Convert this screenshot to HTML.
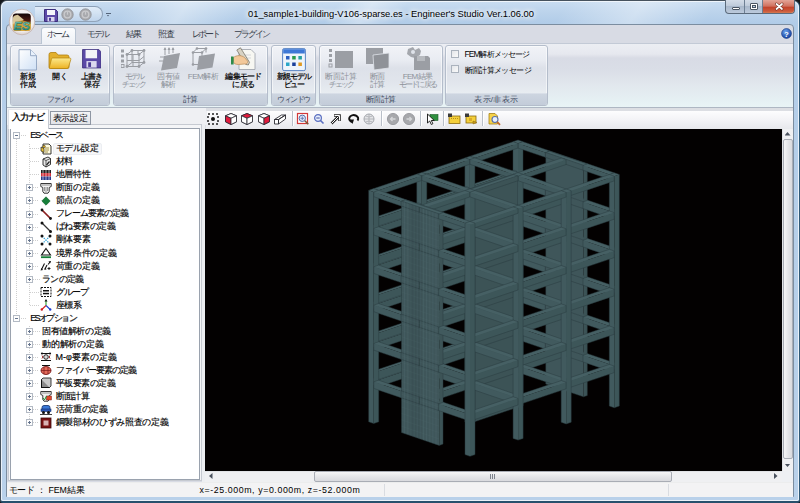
<!DOCTYPE html>
<html lang="ja"><head><meta charset="utf-8"><title>Engineer's Studio</title>
<style>
html,body{margin:0;padding:0;}
body{width:800px;height:503px;overflow:hidden;position:relative;background:#14181c;font-family:"Liberation Sans",sans-serif;font-size:9px;color:#000;}
div,span,svg,i,b{position:absolute;box-sizing:border-box;display:block;font-style:normal;font-weight:normal;}
.t{white-space:nowrap;line-height:1;}
.e{fill:none;stroke:#283a3e;stroke-width:.55;stroke-opacity:.85}
#frame{left:0;top:0;width:800px;height:503px;border:1px solid #46525e;border-right:1.5px solid #2f5a78;border-bottom:2px solid #27506c;border-radius:7px 7px 3px 3px;background:linear-gradient(180deg,#c9ddf1 0,#bdd4ec 10px,#b1cce8 22px,#b4cee9 60px,#b9d1ea 100%);overflow:hidden;}
#frameglow{left:1px;top:1px;width:797.5px;height:500px;border:1px solid rgba(255,255,255,.7);border-radius:6px 6px 2px 2px;}
.streak{background:linear-gradient(90deg,rgba(255,255,255,0),rgba(255,255,255,.35),rgba(255,255,255,0));height:22px;top:1px;transform:skewX(-35deg);}
#client{left:6px;top:24px;width:788px;height:473px;background:#d8dbe4;border:1px solid #7b8da0;border-radius:4px 4px 0 0;}
#title{left:248px;top:10.3px;font-size:9.35px;color:#000;text-shadow:0 0 4px #fff,0 0 6px #fff,0 0 8px rgba(255,255,255,.8);}
#capbtn{left:725px;top:0;width:70px;height:14px;border:1px solid #5b6b7c;border-top:none;border-radius:0 0 4px 4px;overflow:hidden;background:linear-gradient(180deg,#d3dce8,#bfcbda 45%,#a9b8cb 50%,#bccadc);}
#capbtn .min{left:0;top:0;width:19px;height:14px;border-right:1px solid #6d7f93;}
#capbtn .max{left:19px;top:0;width:18px;height:14px;border-right:1px solid #6d7f93;}
#capbtn .cls{left:37px;top:0;width:32px;height:14px;background:linear-gradient(180deg,#e3a598,#d0705e 45%,#c2412a 50%,#cc5a3c 80%,#d98a5c);}
.tab{top:30px;font-size:8.6px;color:#363d49;}
#hometab{left:41px;top:27px;width:35px;height:17px;background:linear-gradient(180deg,#fbfcfe,#eef1f6);border:1px solid #b9c4d2;border-bottom:none;border-radius:3px 3px 0 0;}
#ribbon{left:7px;top:42.5px;width:786px;height:65.5px;background:linear-gradient(180deg,#eceef3 0,#e6e8ef 10px,#d8dbe5 14px,#dadee7 26px,#e2e8ee 42px,#e6f1f4 58px,#e9f4f6 63px,#dfe6ea 65px);border-top:1px solid #c3cad6;border-bottom:1px solid #aeb7c3;}
.grp{top:44.5px;height:61px;border:1px solid #b4bdcb;border-radius:3px;background:linear-gradient(180deg,#f1f3f7 0,#e9ecf2 14px,#dde1e9 22px,#e1e5ec 36px,#e9eef2 49px);box-shadow:0 0 0 1px rgba(255,255,255,.55) inset;overflow:hidden;}
.grp .lab{left:0;bottom:0;width:100%;height:12px;background:linear-gradient(180deg,#cdd5e0,#c3ccd9);border-top:1px solid #d9dfe8;}
.grp .lab span{left:0;width:100%;top:2px;text-align:center;font-size:8px;color:#3e4b5e;line-height:1;white-space:nowrap;}
.bl{-webkit-text-stroke:.2px #000;font-size:8px;line-height:8.2px;text-align:center;color:#000;white-space:nowrap;width:60px;margin-left:-30px;}
.bl.dis{color:#8d929a;-webkit-text-stroke:0;}
#tbband{left:7px;top:108px;width:786px;height:21px;background:#dcdee3;}
#tbrow{left:205.5px;top:110.8px;width:587.5px;height:18px;background:linear-gradient(180deg,#fdfdfe,#f3f3f6 50%,#e7e8ec);border-left:1px solid #eceef1;}
#navo{left:7.5px;top:124.2px;width:194.5px;height:357px;background:#f4f5f7;border:1px solid #c6cad1;}
#nav{left:9.5px;top:127.5px;width:190.5px;height:352px;background:#fff;border:1px solid #9aa2ae;}
.tr{font-size:9px;line-height:1;white-space:nowrap;color:#000;-webkit-text-stroke:.15px #000;}
#vp{left:205px;top:128.5px;width:576.5px;height:342px;background:#030101;overflow:hidden;}
#status{left:7px;top:481.5px;width:786px;height:15px;background:#f3f3f4;border-top:1px solid #eceded;}

</style></head>
<body>
<div id="frame"><div class="streak" style="left:120px;width:120px"></div><div class="streak" style="left:330px;width:70px"></div><div class="streak" style="left:560px;width:150px"></div></div>
<div id="frameglow"></div>
<div id="client"></div>
<div id="ribbon"></div>
<div id="tbband"></div><div id="tbrow"></div>
<div id="title" class="t">01_sample1-building-V106-sparse.es - Engineer's Studio Ver.1.06.00</div>
<div id="capbtn"><div class="min"><i style="left:6px;top:7px;width:8px;height:3px;background:#fff;border:1px solid #4a5563;border-radius:1px"></i></div><div class="max"><i style="left:5px;top:3px;width:8px;height:7px;border:1px solid #4a5563;background:#fff;border-radius:1px"></i><i style="left:7px;top:5px;width:4px;height:3px;border:1px solid #4a5563;background:#b9cfe6"></i></div><div class="cls"><svg width="32" height="14" viewBox="0 0 32 14" style="left:0;top:0"><path d="M13.500 4l5.500 5M19 4l-5.500 5" stroke="#6a2f25" stroke-width="3" stroke-linecap="round"/><path d="M13.500 4l5.500 5M19 4l-5.500 5" stroke="#fff" stroke-width="1.700" stroke-linecap="round"/></svg></div></div>
<svg id="appbtn" width="30" height="30" viewBox="0 0 30 30" style="left:7px;top:7px">
<defs><radialGradient id="ab1" cx="50%" cy="40%" r="60%"><stop offset="0" stop-color="#ffffff"/><stop offset=".75" stop-color="#f3f1f1"/><stop offset="1" stop-color="#d9cdca"/></radialGradient>
<linearGradient id="ab2" x1="0" y1="0" x2="0" y2="1"><stop offset="0" stop-color="#120606"/><stop offset=".4" stop-color="#4a1a12"/><stop offset=".62" stop-color="#b78a3a"/><stop offset="1" stop-color="#d9a43a"/></linearGradient>
<linearGradient id="ab3" x1="0" y1="0" x2="0" y2="1"><stop offset="0" stop-color="#8fe0cc"/><stop offset="1" stop-color="#0f7f78"/></linearGradient></defs>
<circle cx="15" cy="15" r="12.800" fill="url(#ab1)" stroke="#c4b4b0" stroke-width=".8"/>
<rect x="5.800" y="6.400" width="18" height="17.600" rx="3.200" fill="url(#ab2)"/>
<path d="M5.800 12q0-3 2-3.500l3-.8 6 5-6 4-5 1z" fill="#e9d9a8" opacity=".9"/>
<path d="M5.800 17l9-4 9 3v5q0 3-3.200 3H9q-3.200 0-3.200-3.200z" fill="#d8a63c" opacity=".75"/>
<text x="6.600" y="23.300" font-family="Liberation Sans, sans-serif" font-size="10.800" font-weight="bold" font-style="italic" fill="url(#ab3)" stroke="#0c5a58" stroke-width=".3" textLength="16.500" lengthAdjust="spacingAndGlyphs">ES</text>
</svg>
<div id="qat" style="left:35px;top:6px;width:68px;height:16px;border:1px solid rgba(120,140,165,.75);border-radius:0 8px 8px 0;border-left:none;background:linear-gradient(180deg,rgba(235,243,251,.75),rgba(200,217,236,.55))"></div>
<svg width="14" height="13" viewBox="0 0 14 13" style="left:43.500px;top:8.500px"><path d="M.5.5h11l2 2v10H.5z" fill="#5d4aa8" stroke="#3d2f7c"/><rect x="3" y="1" width="8" height="5" fill="#f4f4fa"/><rect x="3.500" y="8" width="7" height="4.500" fill="#d9d6ee"/><rect x="5" y="8.800" width="2" height="3" fill="#4a3a94"/></svg>
<svg width="13" height="13" viewBox="0 0 13 13" style="left:61.2px;top:8.200px"><circle cx="6.500" cy="6.500" r="5.700" fill="#a9aaae" stroke="#8d8f95" stroke-width=".8"/><circle cx="6.500" cy="6.500" r="3.300" fill="none" stroke="#c9cacd" stroke-width="1.300"/><path d="M6.500 3.500v3.200" stroke="#c9cacd" stroke-width="1.200"/></svg>
<svg width="13" height="13" viewBox="0 0 13 13" style="left:79.1px;top:8.200px"><circle cx="6.500" cy="6.500" r="5.700" fill="#a9aaae" stroke="#8d8f95" stroke-width=".8"/><circle cx="6.500" cy="6.500" r="3.300" fill="none" stroke="#c9cacd" stroke-width="1.300"/><path d="M6.500 3.500v3.200" stroke="#c9cacd" stroke-width="1.200"/></svg>
<i style="left:105.500px;top:12.500px;width:5px;height:1px;background:#55657a"></i><i style="left:106.500px;top:14.500px;width:3px;height:2px;background:#55657a;clip-path:polygon(0 0,100% 0,50% 100%)"></i>
<div id="hometab"></div>
<span class="t tab" style="letter-spacing:-1.93px;left:46.5px">ホーム</span>
<span class="t tab" style="letter-spacing:-1.83px;left:86.5px">モデル</span>
<span class="t tab" style="letter-spacing:-1.25px;left:125.5px">結果</span>
<span class="t tab" style="letter-spacing:-1.25px;left:158.0px">照査</span>
<span class="t tab" style="letter-spacing:-2.25px;left:191.5px">レポート</span>
<span class="t tab" style="letter-spacing:-1.80px;left:233.5px">プラグイン</span>
<svg width="11" height="11" viewBox="0 0 12 12" style="left:781px;top:28px"><defs><radialGradient id="hg" cx="40%" cy="30%" r="75%"><stop offset="0" stop-color="#6aa0ea"/><stop offset="1" stop-color="#123e9c"/></radialGradient></defs><circle cx="6" cy="6" r="5.400" fill="url(#hg)" stroke="#0c2f7a" stroke-width=".6"/><text x="6" y="9.300" text-anchor="middle" font-family="Liberation Sans, sans-serif" font-weight="bold" font-size="8.500" fill="#fff">?</text></svg>
<div class="grp" style="left:9.5px;width:100.0px"><div class="lab"><span><span class="t" style="letter-spacing:-1.75px;position:static;display:inline">ファイル</span></span></div></div>
<div class="grp" style="left:112.5px;width:155.5px"><div class="lab"><span><span class="t" style="letter-spacing:-0.50px;position:static;display:inline">計算</span></span></div></div>
<div class="grp" style="left:270.5px;width:45.5px"><div class="lab"><span><span class="t" style="letter-spacing:-1.50px;position:static;display:inline">ウィンドウ</span></span></div></div>
<div class="grp" style="left:318.5px;width:124.0px"><div class="lab"><span><span class="t" style="letter-spacing:-0.50px;position:static;display:inline">断面計算</span></span></div></div>
<div class="grp" style="left:445.0px;width:102.5px"><div class="lab"><span><span class="t" style="letter-spacing:0.26px;position:static;display:inline">表示/非表示</span></span></div></div>
<span class="bl" style="left:27.5px;top:72.6px"><span class="t" style="letter-spacing:-0.25px;position:static;display:inline">新規</span></span>
<span class="bl" style="left:27.5px;top:80.7px"><span class="t" style="letter-spacing:-0.25px;position:static;display:inline">作成</span></span>
<span class="bl" style="left:59.5px;top:72.6px"><span class="t" style="letter-spacing:-0.25px;position:static;display:inline">開く</span></span>
<span class="bl" style="left:91.5px;top:72.6px"><span class="t" style="letter-spacing:-0.93px;position:static;display:inline">上書き</span></span>
<span class="bl" style="left:91.5px;top:80.7px"><span class="t" style="letter-spacing:-0.25px;position:static;display:inline">保存</span></span>
<span class="bl dis" style="left:133.5px;top:72.6px"><span class="t" style="letter-spacing:-2.00px;position:static;display:inline">モデル</span></span>
<span class="bl dis" style="left:133.5px;top:80.7px"><span class="t" style="letter-spacing:-2.10px;position:static;display:inline">チェック</span></span>
<span class="bl dis" style="left:168.5px;top:72.6px"><span class="t" style="letter-spacing:-0.50px;position:static;display:inline">固有値</span></span>
<span class="bl dis" style="left:168.5px;top:80.7px"><span class="t" style="letter-spacing:-0.10px;position:static;display:inline">解析</span></span>
<span class="bl dis" style="left:203.0px;top:72.6px"><span class="t" style="letter-spacing:-0.50px;position:static;display:inline">FEM解析</span></span>
<span class="bl" style="left:243.5px;top:72.6px"><span class="t" style="letter-spacing:-0.80px;position:static;display:inline">編集モード</span></span>
<span class="bl" style="left:243.5px;top:80.7px"><span class="t" style="letter-spacing:-0.50px;position:static;display:inline">に戻る</span></span>
<span class="bl" style="left:293.5px;top:72.6px"><span class="t" style="letter-spacing:-1.24px;position:static;display:inline">新規モデル</span></span>
<span class="bl" style="left:293.5px;top:80.7px"><span class="t" style="letter-spacing:-1.73px;position:static;display:inline">ビュー</span></span>
<span class="bl dis" style="left:341.0px;top:72.6px"><span class="t" style="letter-spacing:-0.20px;position:static;display:inline">断面計算</span></span>
<span class="bl dis" style="left:341.0px;top:80.7px"><span class="t" style="letter-spacing:-2.08px;position:static;display:inline">チェック</span></span>
<span class="bl dis" style="left:377.0px;top:72.6px"><span class="t" style="letter-spacing:-0.50px;position:static;display:inline">断面</span></span>
<span class="bl dis" style="left:377.0px;top:80.7px"><span class="t" style="letter-spacing:-0.50px;position:static;display:inline">計算</span></span>
<span class="bl dis" style="left:417.5px;top:72.6px"><span class="t" style="letter-spacing:-0.68px;position:static;display:inline">FEM結果</span></span>
<span class="bl dis" style="left:417.5px;top:80.7px"><span class="t" style="letter-spacing:-1.67px;position:static;display:inline">モードに戻る</span></span>
<svg width="20" height="22" viewBox="0 0 20 22" style="left:18px;top:48.500px"><defs><linearGradient id="nd" x1="0" y1="0" x2="1" y2="1"><stop offset="0" stop-color="#ffffff"/><stop offset="1" stop-color="#cfe0f5"/></linearGradient></defs><path d="M1 .7h11.500l6 6V21H1z" fill="url(#nd)" stroke="#8ea3c0" stroke-width=".9"/><path d="M12.500 .7v6h6" fill="#e9f1fb" stroke="#8ea3c0" stroke-width=".9"/></svg>
<svg width="24" height="19" viewBox="0 0 24 19" style="left:48px;top:50.500px"><defs><linearGradient id="fo" x1="0" y1="0" x2="0" y2="1"><stop offset="0" stop-color="#fdea8c"/><stop offset="1" stop-color="#ecb224"/></linearGradient></defs><path d="M1 3.500q0-2 2-2h5l2 2.500h9q2 0 2 2V16q0 1.500-1.500 1.500H2.500Q1 17.500 1 16z" fill="#e3b02c" stroke="#b3820f" stroke-width=".8"/><path d="M4.500 7h17q1.800 0 1.300 1.600l-2.300 7.600q-.4 1.300-1.900 1.300H2.300q-1.300 0-.9-1.300l2-7.800Q3.700 7 4.500 7z" fill="url(#fo)" stroke="#b3820f" stroke-width=".7"/></svg>
<svg width="19.500" height="19.500" viewBox="0 0 22 21" preserveAspectRatio="none" style="left:81.500px;top:49.300px"><path d="M.6.600h18.400l2.400 2.400v17.400H.6z" fill="#5b49a6" stroke="#3b2d7b" stroke-width=".9"/><rect x="4" y="1" width="13" height="9" fill="#f3f3f8"/><rect x="5" y="13" width="11.500" height="7" fill="#dcd9ef"/><rect x="7" y="14.300" width="3.200" height="5" fill="#4a3a94"/></svg>
<svg width="25" height="22" viewBox="0 0 25 22" style="left:121px;top:48px"><g stroke="#9a9da3" stroke-width="1" fill="none"><path d="M6 6.500h12v12H6zM11 2.500h12v12H11zM6 6.500l5-4M18 6.500l5-4M18 18.500l5-4M6 18.500l5-4M12 6.500v12M6 12.500h12M17 2.500v4M23 8.500l-5 4"/></g><g fill="#9a9da3"><rect x="0" y="1.500" width="3" height="3"/><rect x="0" y="6.500" width="3" height="3"/><rect x="0" y="11.500" width="3" height="3"/><rect x="0" y="16.500" width="3" height="3" fill="none" stroke="#9a9da3"/><circle cx="6" cy="6.500" r="1.400"/><circle cx="18" cy="6.500" r="1.400"/><circle cx="6" cy="18.500" r="1.400"/><circle cx="18" cy="18.500" r="1.400"/><circle cx="11" cy="2.500" r="1.400"/><circle cx="23" cy="2.500" r="1.400"/><circle cx="23" cy="14.500" r="1.400"/></g></svg>
<svg width="26" height="24" viewBox="0 0 26 24" style="left:156px;top:47px"><path d="M8 9l16-3-3 15-16 2.500z" fill="#9b9ea4"/><g stroke="#9b9ea4" stroke-width="1"><path d="M9 1v7M13 1v6M17 1v5M4 10h4M3 14h4"/></g><path d="M9 0l-1.500 3h3zM13 0l-1.500 3h3zM17 0l-1.500 3h3z" fill="#9b9ea4"/></svg>
<svg width="26" height="24" viewBox="0 0 26 24" style="left:190px;top:47px"><g stroke="#9a9da3" stroke-width="1" fill="none"><path d="M3 5.500h9v12H3zM7 1.500h9v4M3 5.500l4-4M12 5.500l4-4"/></g><g fill="#9a9da3"><circle cx="3" cy="5.500" r="1.300"/><circle cx="12" cy="5.500" r="1.300"/><circle cx="7" cy="1.500" r="1.300"/><circle cx="16" cy="1.500" r="1.300"/><circle cx="3" cy="17.500" r="1.300"/></g><path d="M9 9l16-2.500-2.500 14L7 23z" fill="#9b9ea4"/></svg>
<svg width="26" height="24" viewBox="0 0 26 24" style="left:231px;top:47px"><path d="M8 2.500h12l4 4v16H8z" fill="#f7f7f2" stroke="#9aa0a8" stroke-width=".8"/><path d="M11 8h9M11 11h9M11 14h6" stroke="#c9cdd3" stroke-width=".8"/><path d="M9.500 .8l9 14.500-1.200 2.700-2.600-.6L5.800 3z" fill="#d8d3c4" stroke="#6e6a5e" stroke-width=".7"/><path d="M2.500 10.500c3-2.500 8-2.500 11 0l3 3.500c1 1.500-1 3.500-3 3l-6 .5c-3 0-5-1-5-3z" fill="#f3c99a" stroke="#b98a55" stroke-width=".7"/><rect x="0" y="9.500" width="2.600" height="8" fill="#2e8b4a"/></svg>
<svg width="24" height="24" viewBox="0 0 24 24" style="left:282px;top:48px"><rect x=".6" y=".6" width="22.800" height="22" rx="1.500" fill="#eef4fb" stroke="#5b86c4" stroke-width="1"/><rect x="1.200" y="1.200" width="21.600" height="4.300" fill="#3d78d6"/><g><rect x="4" y="8" width="3.500" height="3.500" fill="#2b5fc0"/><rect x="10.200" y="8" width="3.500" height="3.500" fill="#2a9a4a"/><rect x="16.400" y="8" width="3.500" height="3.500" fill="#23a0a0"/><rect x="4" y="14.500" width="3.500" height="3.500" fill="#2aa6c8"/><rect x="10.200" y="14.500" width="3.500" height="3.500" fill="#1a3f9a"/><rect x="16.400" y="14.500" width="3.500" height="3.500" fill="#e09a22"/></g></svg>
<svg width="26" height="23" viewBox="0 0 26 23" style="left:328px;top:48px"><rect x="7" y="3" width="18" height="17" fill="#9b9ea4"/><g fill="#9b9ea4"><rect x="1" y="1" width="3" height="3"/><rect x="1" y="6" width="3" height="3"/><rect x="1" y="11" width="3" height="3"/><rect x="1" y="16" width="3" height="3" fill="none" stroke="#9b9ea4"/></g></svg>
<svg width="26" height="24" viewBox="0 0 26 24" style="left:364px;top:47px"><path d="M2 1h17v16H2z" fill="#9b9ea4"/><path d="M9 8l16-2v15l-15 2z" fill="#8f9298" stroke="#dfe3ea" stroke-width=".8"/></svg>
<svg width="26" height="25" viewBox="0 0 26 25" style="left:405px;top:46px"><path d="M3 3l5-2 2 3 4-2 2 3-1 4-5 3-4-1-4-3z" fill="#a4a7ad"/><circle cx="8" cy="6" r="2" fill="#dfe3ea"/><path d="M9 10h14l2 2v12H9z" fill="#9b9ea4"/><rect x="12" y="10" width="8" height="5" fill="#b7babf"/></svg>
<i style="left:450.500px;top:49.5px;width:8px;height:8px;border:1px solid #aab2bd;background:linear-gradient(135deg,#e4e6ea,#fafafa)"></i>
<span class="t" style="letter-spacing:-0.85px;left:464.500px;top:49.8px;font-size:8.300px">FEM解析メッセージ</span>
<i style="left:450.500px;top:65.3px;width:8px;height:8px;border:1px solid #aab2bd;background:linear-gradient(135deg,#e4e6ea,#fafafa)"></i>
<span class="t" style="letter-spacing:-0.61px;left:464.500px;top:65.6px;font-size:8.300px">断面計算メッセージ</span>
<svg width="14" height="14" viewBox="0 0 14 14" style="left:206.2px;top:112.0px"><path d="M2 2h10v10H2z" fill="none" stroke="#222" stroke-width="1.500" stroke-dasharray="2 2"/><circle cx="7" cy="7" r="2" fill="#111"/></svg>
<svg width="14" height="14" viewBox="0 0 14 14" style="left:223.5px;top:112.0px"><path d="M7 1.500l5.500 2.300v6L7 12.500 1.500 9.800v-6z" fill="#fff" stroke="#2b2b33" stroke-width=".9" stroke-linejoin="round"/><path d="M7 1.500l5.500 2.300L7 6.300 1.500 3.800z" fill="#fff" stroke="#2b2b33" stroke-width=".8" stroke-linejoin="round"/><path d="M1.500 3.800L7 6.300v6.200L1.500 9.800z" fill="#e11b3c" stroke="#2b2b33" stroke-width=".8" stroke-linejoin="round"/><path d="M12.500 3.800L7 6.300v6.200l5.500-2.700z" fill="#fff" stroke="#2b2b33" stroke-width=".8" stroke-linejoin="round"/></svg>
<svg width="14" height="14" viewBox="0 0 14 14" style="left:240.4px;top:112.0px"><path d="M7 1.500l5.500 2.300v6L7 12.500 1.500 9.800v-6z" fill="#fff" stroke="#2b2b33" stroke-width=".9" stroke-linejoin="round"/><path d="M7 1.500l5.500 2.300L7 6.300 1.500 3.800z" fill="#e11b3c" stroke="#2b2b33" stroke-width=".8" stroke-linejoin="round"/><path d="M1.500 3.800L7 6.300v6.200L1.500 9.800z" fill="#fff" stroke="#2b2b33" stroke-width=".8" stroke-linejoin="round"/><path d="M12.500 3.800L7 6.300v6.200l5.500-2.700z" fill="#fff" stroke="#2b2b33" stroke-width=".8" stroke-linejoin="round"/></svg>
<svg width="14" height="14" viewBox="0 0 14 14" style="left:257.2px;top:112.0px"><path d="M7 1.500l5.500 2.300v6L7 12.500 1.500 9.800v-6z" fill="#fff" stroke="#2b2b33" stroke-width=".9" stroke-linejoin="round"/><path d="M7 1.500l5.500 2.300L7 6.300 1.500 3.800z" fill="#fff" stroke="#2b2b33" stroke-width=".8" stroke-linejoin="round"/><path d="M1.500 3.800L7 6.300v6.200L1.500 9.800z" fill="#fff" stroke="#2b2b33" stroke-width=".8" stroke-linejoin="round"/><path d="M12.500 3.800L7 6.300v6.200l5.500-2.700z" fill="#e11b3c" stroke="#2b2b33" stroke-width=".8" stroke-linejoin="round"/></svg>
<svg width="14" height="14" viewBox="0 0 14 14" style="left:273.0px;top:112.0px"><path d="M1.500 7.500l7-4.500h4l-7 4.500zM1.500 7.500h4v4.500h-4zM5.500 7.500l7-4.500v4L5.500 12z" fill="#fff" stroke="#2b2b33" stroke-width=".9" stroke-linejoin="round"/></svg>
<i style="left:291.5px;top:111px;width:1px;height:15px;background:#b9bfc9"></i><i style="left:292.5px;top:111px;width:1px;height:15px;background:#fff"></i>
<svg width="14" height="14" viewBox="0 0 14 14" style="left:296.2px;top:112.0px"><rect x="1.500" y="1.500" width="10" height="10" fill="#fff" stroke="#d23a3a" stroke-width="1.200"/><circle cx="6.300" cy="6.300" r="3.200" fill="#dbe8fa" stroke="#5a6fa8" stroke-width="1"/><path d="M6.300 4.500v3.600M4.500 6.300h3.600" stroke="#5a6fa8" stroke-width=".8"/><path d="M8.800 8.800l3.500 3.500" stroke="#7a5a3a" stroke-width="1.600"/></svg>
<svg width="14" height="14" viewBox="0 0 14 14" style="left:312.4px;top:112.0px"><circle cx="6" cy="6" r="3.400" fill="#e6eefc" stroke="#5b6fc0" stroke-width="1.200"/><path d="M4.300 6h3.400" stroke="#3a4aa0" stroke-width="1"/><path d="M8.500 8.500l3 3" stroke="#5b6fc0" stroke-width="1.600"/></svg>
<svg width="14" height="14" viewBox="0 0 14 14" style="left:329.2px;top:112.0px"><path d="M2.500 11.500l7-7M5 3.500h5.500V9" fill="none" stroke="#222" stroke-width="2.600"/><path d="M2.500 11.500l7-7M5.500 3.500h5V8.500" fill="none" stroke="#fff" stroke-width="1"/></svg>
<svg width="14" height="14" viewBox="0 0 14 14" style="left:346.0px;top:112.0px"><path d="M11.500 8.500a4.500 3.500 0 1 0-5 1.500" fill="none" stroke="#111" stroke-width="2"/><path d="M3.500 7.500l4.500 0l-1.500 4.500z" fill="#111"/></svg>
<svg width="14" height="14" viewBox="0 0 14 14" style="left:362.2px;top:112.0px"><circle cx="7" cy="7" r="5" fill="#e3e4e7" stroke="#a5a8ae" stroke-width="1"/><path d="M2 7h10M7 2v10M3.500 4q3.500 2 7 0M3.500 10q3.500-2 7 0" stroke="#a5a8ae" stroke-width=".7" fill="none"/></svg>
<i style="left:380.5px;top:111px;width:1px;height:15px;background:#b9bfc9"></i><i style="left:381.5px;top:111px;width:1px;height:15px;background:#fff"></i>
<svg width="14" height="14" viewBox="0 0 14 14" style="left:385.5px;top:112.0px"><circle cx="7" cy="7" r="5.600" fill="#a7a8ac" stroke="#8f9196" stroke-width=".8"/><path d="M4.500 7h5M6.500 5L4.500 7l2 2" stroke="#d6d7da" stroke-width="1.300" fill="none"/></svg>
<svg width="14" height="14" viewBox="0 0 14 14" style="left:402.4px;top:112.0px"><circle cx="7" cy="7" r="5.600" fill="#a7a8ac" stroke="#8f9196" stroke-width=".8"/><path d="M4.500 7h5M7.500 5l2 2-2 2" stroke="#d6d7da" stroke-width="1.300" fill="none"/></svg>
<i style="left:420.0px;top:111px;width:1px;height:15px;background:#b9bfc9"></i><i style="left:421.0px;top:111px;width:1px;height:15px;background:#fff"></i>
<svg width="14" height="14" viewBox="0 0 14 14" style="left:424.9px;top:112.0px"><rect x="5" y="2.500" width="8" height="6" fill="#2f8f3f" stroke="#1c5c28" stroke-width=".6"/><path d="M2.500 2v9l2.200-2 1.600 3.500 1.600-.8L6.300 8.500h3z" fill="#fff" stroke="#111" stroke-width=".9" stroke-linejoin="round"/></svg>
<i style="left:442.5px;top:111px;width:1px;height:15px;background:#b9bfc9"></i><i style="left:443.5px;top:111px;width:1px;height:15px;background:#fff"></i>
<svg width="14" height="14" viewBox="0 0 14 14" style="left:447.4px;top:112.0px"><rect x="2" y="4" width="11" height="7.500" fill="#f4cf3a" stroke="#8a6a10" stroke-width=".8"/><rect x="1" y="1.500" width="4" height="3.500" fill="#3b3b3b"/><path d="M4 6.500h7" stroke="#a37f16" stroke-width=".8" stroke-dasharray="1 1"/></svg>
<svg width="14" height="14" viewBox="0 0 14 14" style="left:464.2px;top:112.0px"><rect x="2" y="4" width="10" height="7" fill="#f4cf3a" stroke="#8a6a10" stroke-width=".8"/><rect x="1" y="1.500" width="4" height="3.500" fill="#3b3b3b"/><path d="M9 9l4 1.500-4 1.500z" fill="#c89a1a" stroke="#8a6a10" stroke-width=".5"/><rect x="5" y="6" width="3" height="3" fill="#d9a92a"/></svg>
<i style="left:482.0px;top:111px;width:1px;height:15px;background:#b9bfc9"></i><i style="left:483.0px;top:111px;width:1px;height:15px;background:#fff"></i>
<svg width="14" height="14" viewBox="0 0 14 14" style="left:486.7px;top:112.0px"><path d="M2 1.500h6l2.500 2.500v8H2z" fill="#f6d24a" stroke="#a5801a" stroke-width=".8"/><circle cx="8" cy="7.500" r="3" fill="#e6f0ff" stroke="#5a6fa8" stroke-width="1.100"/><path d="M10.200 9.800l2.800 3" stroke="#c0682a" stroke-width="1.700"/></svg>
<div style="left:7px;top:108px;width:198.500px;height:17px;background:#eff0f3"></div>
<div id="navo"></div><div id="nav"></div>
<div style="left:8px;top:108.500px;width:41px;height:20px;background:#fff;border:1px solid #c5cad2;border-bottom:none;border-left-color:#dfe2e7;border-top-color:#e4e6ea"></div>
<div style="left:49.500px;top:111px;width:41.500px;height:13.500px;background:linear-gradient(180deg,#f3f4f6,#e1e3e8);border:1px solid #8e96a3"></div>
<span class="t" style="letter-spacing:-0.88px;left:12px;top:112px;font-size:9.400px;font-weight:bold;color:#111">入力ナビ</span>
<span class="t" style="letter-spacing:-0.38px;left:52.800px;top:113.700px;font-size:8.800px">表示設定</span>
<div style="left:202px;top:124px;width:3px;height:357.500px;background:#eceef1"></div>
<i style="left:15.5px;top:138.8px;width:1px;height:176.4px;background:repeating-linear-gradient(180deg,#cfcfcf 0,#cfcfcf 1px,transparent 1px,transparent 2px)"></i>
<i style="left:28.5px;top:143.8px;width:1px;height:161.4px;background:repeating-linear-gradient(180deg,#cfcfcf 0,#cfcfcf 1px,transparent 1px,transparent 2px)"></i>
<i style="left:28.5px;top:326.2px;width:1px;height:96.2px;background:repeating-linear-gradient(180deg,#cfcfcf 0,#cfcfcf 1px,transparent 1px,transparent 2px)"></i>
<i style="left:19.0px;top:135.3px;width:8.0px;height:1px;background:repeating-linear-gradient(90deg,#cfcfcf 0,#cfcfcf 1px,transparent 1px,transparent 2px)"></i>
<i style="left:19.0px;top:317.7px;width:8.0px;height:1px;background:repeating-linear-gradient(90deg,#cfcfcf 0,#cfcfcf 1px,transparent 1px,transparent 2px)"></i>
<div style="left:53px;top:142.6px;width:49px;height:12px;background:#f6f7f9;border:1px solid #eceef2;border-radius:2px"></div>
<svg width="7" height="7" viewBox="0 0 7 7" style="left:12.5px;top:132.3px"><rect x=".5" y=".5" width="6" height="6" fill="#fdfdfd" stroke="#b3bac4" stroke-width="1"/><path d="M2 3.500h3" stroke="#66758e" stroke-width="1"/></svg>
<span class="t tr" style="letter-spacing:-1.20px;left:30.2px;top:131.2px">ESベース</span>
<i style="left:29.5px;top:148.3px;width:9.5px;height:1px;background:repeating-linear-gradient(90deg,#cfcfcf 0,#cfcfcf 1px,transparent 1px,transparent 2px)"></i>
<svg width="12" height="12" viewBox="0 0 12 12" style="left:40px;top:142.8px"><path d="M3 1h6l2 2v8H3z" fill="#fffbe0" stroke="#222" stroke-width=".9"/><path d="M1 4l3 1.500v4L1 8z" fill="#e7c23a" stroke="#222" stroke-width=".7"/><path d="M5 5h4M5 7h4M5 9h3" stroke="#8a7a2a" stroke-width=".8"/><circle cx="4" cy="3.500" r="1.300" fill="#e0b020" stroke="#222" stroke-width=".5"/></svg>
<span class="t tr" style="letter-spacing:-0.40px;left:55.6px;top:144.2px">モデル設定</span>
<i style="left:29.5px;top:161.4px;width:9.5px;height:1px;background:repeating-linear-gradient(90deg,#cfcfcf 0,#cfcfcf 1px,transparent 1px,transparent 2px)"></i>
<svg width="12" height="12" viewBox="0 0 12 12" style="left:40px;top:155.9px"><path d="M3 3l5-2 2.500 1.500v6L6 11 3 9z" fill="#e8e8e8" stroke="#222" stroke-width=".9"/><path d="M3 3l3 1.500 4.500-2M6 4.500V11" stroke="#222" stroke-width=".7" fill="none"/><path d="M6.500 9l3-3.500" stroke="#222" stroke-width="1.200"/></svg>
<span class="t tr" style="letter-spacing:-0.50px;left:55.6px;top:157.3px">材料</span>
<i style="left:29.5px;top:174.4px;width:9.5px;height:1px;background:repeating-linear-gradient(90deg,#cfcfcf 0,#cfcfcf 1px,transparent 1px,transparent 2px)"></i>
<svg width="12" height="12" viewBox="0 0 12 12" style="left:40px;top:168.9px"><rect x="1" y="1" width="10" height="3" fill="#222"/><rect x="1" y="4" width="10" height="3.500" fill="#d0303a"/><rect x="1" y="7.500" width="10" height="3.500" fill="#2a3a8a"/><path d="M3 1v10M6 1v10M9 1v10" stroke="#fff" stroke-width=".6"/></svg>
<span class="t tr" style="letter-spacing:-0.25px;left:55.6px;top:170.3px">地層特性</span>
<svg width="7" height="7" viewBox="0 0 7 7" style="left:25.5px;top:184.4px"><rect x=".5" y=".5" width="6" height="6" fill="#fdfdfd" stroke="#b3bac4" stroke-width="1"/><path d="M2 3.500h3M3.500 2v3" stroke="#66758e" stroke-width="1"/></svg>
<i style="left:33.0px;top:187.4px;width:6.0px;height:1px;background:repeating-linear-gradient(90deg,#cfcfcf 0,#cfcfcf 1px,transparent 1px,transparent 2px)"></i>
<svg width="12" height="12" viewBox="0 0 12 12" style="left:40px;top:181.9px"><path d="M.8 1.500h10.400v3l-2 1v4l-1.200 1.700H4l-1.200-1.700v-4l-2-1z" fill="#f2f2f2" stroke="#222" stroke-width=".9"/><path d="M2.500 3h7" stroke="#222" stroke-width=".9" stroke-dasharray="1 1"/><path d="M4.500 5v4M7.500 5v4M6 5v5" stroke="#555" stroke-width=".6"/></svg>
<span class="t tr" style="letter-spacing:-0.24px;left:55.6px;top:183.3px">断面の定義</span>
<svg width="7" height="7" viewBox="0 0 7 7" style="left:25.5px;top:197.4px"><rect x=".5" y=".5" width="6" height="6" fill="#fdfdfd" stroke="#b3bac4" stroke-width="1"/><path d="M2 3.500h3M3.500 2v3" stroke="#66758e" stroke-width="1"/></svg>
<i style="left:33.0px;top:200.4px;width:6.0px;height:1px;background:repeating-linear-gradient(90deg,#cfcfcf 0,#cfcfcf 1px,transparent 1px,transparent 2px)"></i>
<svg width="12" height="12" viewBox="0 0 12 12" style="left:40px;top:194.9px"><path d="M6 1.800L10.200 6 6 10.200 1.800 6z" fill="#17803a" stroke="#0d5a26" stroke-width=".6"/></svg>
<span class="t tr" style="letter-spacing:-0.24px;left:55.6px;top:196.3px">節点の定義</span>
<svg width="7" height="7" viewBox="0 0 7 7" style="left:25.5px;top:210.5px"><rect x=".5" y=".5" width="6" height="6" fill="#fdfdfd" stroke="#b3bac4" stroke-width="1"/><path d="M2 3.500h3M3.500 2v3" stroke="#66758e" stroke-width="1"/></svg>
<i style="left:33.0px;top:213.5px;width:6.0px;height:1px;background:repeating-linear-gradient(90deg,#cfcfcf 0,#cfcfcf 1px,transparent 1px,transparent 2px)"></i>
<svg width="12" height="12" viewBox="0 0 12 12" style="left:40px;top:208.0px"><path d="M2 2l8.500 8.500" stroke="#8a1f1f" stroke-width="1.700"/><circle cx="2" cy="2" r="1.400" fill="#111"/><circle cx="10.500" cy="10.500" r="1.400" fill="#111"/></svg>
<span class="t tr" style="letter-spacing:-0.89px;left:55.6px;top:209.4px">フレーム要素の定義</span>
<svg width="7" height="7" viewBox="0 0 7 7" style="left:25.5px;top:223.5px"><rect x=".5" y=".5" width="6" height="6" fill="#fdfdfd" stroke="#b3bac4" stroke-width="1"/><path d="M2 3.500h3M3.500 2v3" stroke="#66758e" stroke-width="1"/></svg>
<i style="left:33.0px;top:226.5px;width:6.0px;height:1px;background:repeating-linear-gradient(90deg,#cfcfcf 0,#cfcfcf 1px,transparent 1px,transparent 2px)"></i>
<svg width="12" height="12" viewBox="0 0 12 12" style="left:40px;top:221.0px"><path d="M2 2l8.500 8.500" stroke="#333" stroke-width="1.200"/><circle cx="2" cy="2" r="1.500" fill="#111"/><circle cx="10.500" cy="10.500" r="1.500" fill="#111"/></svg>
<span class="t tr" style="letter-spacing:-0.43px;left:55.6px;top:222.4px">ばね要素の定義</span>
<svg width="7" height="7" viewBox="0 0 7 7" style="left:25.5px;top:236.5px"><rect x=".5" y=".5" width="6" height="6" fill="#fdfdfd" stroke="#b3bac4" stroke-width="1"/><path d="M2 3.500h3M3.500 2v3" stroke="#66758e" stroke-width="1"/></svg>
<i style="left:33.0px;top:239.5px;width:6.0px;height:1px;background:repeating-linear-gradient(90deg,#cfcfcf 0,#cfcfcf 1px,transparent 1px,transparent 2px)"></i>
<svg width="12" height="12" viewBox="0 0 12 12" style="left:40px;top:234.0px"><path d="M2 2l8 8M10 2l-8 8" stroke="#2aa0d8" stroke-width="1.100" stroke-dasharray="1.500 1"/><circle cx="2" cy="2" r="1.500" fill="#111"/><circle cx="10" cy="2" r="1.500" fill="#111"/><circle cx="2" cy="10" r="1.500" fill="#111"/><circle cx="10" cy="10" r="1.500" fill="#111"/></svg>
<span class="t tr" style="letter-spacing:-0.25px;left:55.6px;top:235.4px">剛体要素</span>
<svg width="7" height="7" viewBox="0 0 7 7" style="left:25.5px;top:249.6px"><rect x=".5" y=".5" width="6" height="6" fill="#fdfdfd" stroke="#b3bac4" stroke-width="1"/><path d="M2 3.500h3M3.500 2v3" stroke="#66758e" stroke-width="1"/></svg>
<i style="left:33.0px;top:252.6px;width:6.0px;height:1px;background:repeating-linear-gradient(90deg,#cfcfcf 0,#cfcfcf 1px,transparent 1px,transparent 2px)"></i>
<svg width="12" height="12" viewBox="0 0 12 12" style="left:40px;top:247.1px"><path d="M6 1.500L10.500 8h-9z" fill="#fff" stroke="#111" stroke-width="1.100"/><rect x="1" y="9.300" width="10" height="1.800" fill="#17803a"/></svg>
<span class="t tr" style="letter-spacing:-0.29px;left:55.6px;top:248.5px">境界条件の定義</span>
<svg width="7" height="7" viewBox="0 0 7 7" style="left:25.5px;top:262.6px"><rect x=".5" y=".5" width="6" height="6" fill="#fdfdfd" stroke="#b3bac4" stroke-width="1"/><path d="M2 3.500h3M3.500 2v3" stroke="#66758e" stroke-width="1"/></svg>
<i style="left:33.0px;top:265.6px;width:6.0px;height:1px;background:repeating-linear-gradient(90deg,#cfcfcf 0,#cfcfcf 1px,transparent 1px,transparent 2px)"></i>
<svg width="12" height="12" viewBox="0 0 12 12" style="left:40px;top:260.1px"><path d="M1.500 9.500l3-6M5 9l2-4M8 4.500l2.500-3" stroke="#111" stroke-width="1.100"/><path d="M.5 10.500l2.500-.5-1.500-2zM4.300 10l2.300-.8-1.600-1.700zM11 1l-2.500.5 1.500 2z" fill="#111"/><path d="M7.500 8.500h3M9 7v3" stroke="#111" stroke-width=".9"/></svg>
<span class="t tr" style="letter-spacing:-0.24px;left:55.6px;top:261.5px">荷重の定義</span>
<svg width="7" height="7" viewBox="0 0 7 7" style="left:25.5px;top:275.6px"><rect x=".5" y=".5" width="6" height="6" fill="#fdfdfd" stroke="#b3bac4" stroke-width="1"/><path d="M2 3.500h3M3.500 2v3" stroke="#66758e" stroke-width="1"/></svg>
<i style="left:33.0px;top:278.6px;width:8.0px;height:1px;background:repeating-linear-gradient(90deg,#cfcfcf 0,#cfcfcf 1px,transparent 1px,transparent 2px)"></i>
<span class="t tr" style="letter-spacing:-0.80px;left:42.3px;top:274.5px">ランの定義</span>
<i style="left:29.5px;top:291.7px;width:9.5px;height:1px;background:repeating-linear-gradient(90deg,#cfcfcf 0,#cfcfcf 1px,transparent 1px,transparent 2px)"></i>
<svg width="12" height="12" viewBox="0 0 12 12" style="left:40px;top:286.2px"><rect x="1" y="1.500" width="10" height="9" fill="#fff" stroke="#111" stroke-width="1" stroke-dasharray="2 1"/><rect x="3" y="4" width="6" height="1.500" fill="#111"/><rect x="3" y="6.800" width="6" height="1.500" fill="#111"/></svg>
<span class="t tr" style="letter-spacing:-1.00px;left:55.6px;top:287.6px">グループ</span>
<i style="left:29.5px;top:304.7px;width:9.5px;height:1px;background:repeating-linear-gradient(90deg,#cfcfcf 0,#cfcfcf 1px,transparent 1px,transparent 2px)"></i>
<svg width="12" height="12" viewBox="0 0 12 12" style="left:40px;top:299.2px"><path d="M6 6.500V1.500" stroke="#2aa02a" stroke-width="1.100"/><path d="M6 6.500L1.800 10.500" stroke="#d02020" stroke-width="1.100"/><path d="M6 6.500l4.200 4" stroke="#2040d0" stroke-width="1.100"/><path d="M6 0l-1.500 2.500h3z" fill="#111"/><circle cx="1.800" cy="10.500" r="1.200" fill="#d02020"/><circle cx="10.200" cy="10.500" r="1.200" fill="#2040d0"/></svg>
<span class="t tr" style="letter-spacing:-0.33px;left:55.6px;top:300.6px">座標系</span>
<svg width="7" height="7" viewBox="0 0 7 7" style="left:12.5px;top:314.7px"><rect x=".5" y=".5" width="6" height="6" fill="#fdfdfd" stroke="#b3bac4" stroke-width="1"/><path d="M2 3.500h3" stroke="#66758e" stroke-width="1"/></svg>
<span class="t tr" style="letter-spacing:-1.57px;left:30.2px;top:313.6px">ESオプション</span>
<svg width="7" height="7" viewBox="0 0 7 7" style="left:25.5px;top:327.8px"><rect x=".5" y=".5" width="6" height="6" fill="#fdfdfd" stroke="#b3bac4" stroke-width="1"/><path d="M2 3.500h3M3.500 2v3" stroke="#66758e" stroke-width="1"/></svg>
<i style="left:33.0px;top:330.8px;width:8.0px;height:1px;background:repeating-linear-gradient(90deg,#cfcfcf 0,#cfcfcf 1px,transparent 1px,transparent 2px)"></i>
<span class="t tr" style="letter-spacing:-0.45px;left:42.3px;top:326.6px">固有値解析の定義</span>
<svg width="7" height="7" viewBox="0 0 7 7" style="left:25.5px;top:340.8px"><rect x=".5" y=".5" width="6" height="6" fill="#fdfdfd" stroke="#b3bac4" stroke-width="1"/><path d="M2 3.500h3M3.500 2v3" stroke="#66758e" stroke-width="1"/></svg>
<i style="left:33.0px;top:343.8px;width:8.0px;height:1px;background:repeating-linear-gradient(90deg,#cfcfcf 0,#cfcfcf 1px,transparent 1px,transparent 2px)"></i>
<span class="t tr" style="letter-spacing:-0.29px;left:42.3px;top:339.7px">動的解析の定義</span>
<svg width="7" height="7" viewBox="0 0 7 7" style="left:25.5px;top:353.8px"><rect x=".5" y=".5" width="6" height="6" fill="#fdfdfd" stroke="#b3bac4" stroke-width="1"/><path d="M2 3.500h3M3.500 2v3" stroke="#66758e" stroke-width="1"/></svg>
<i style="left:33.0px;top:356.8px;width:6.0px;height:1px;background:repeating-linear-gradient(90deg,#cfcfcf 0,#cfcfcf 1px,transparent 1px,transparent 2px)"></i>
<svg width="12" height="12" viewBox="0 0 12 12" style="left:40px;top:351.3px"><path d="M1 2.500h10M1 9.500h10" stroke="#111" stroke-width="1.100"/><circle cx="6" cy="6" r="2.300" fill="#d8d8d8" stroke="#111" stroke-width=".9"/><path d="M2 4.500q1.500 1.500 0 3M10 4.500q-1.500 1.500 0 3" stroke="#a02020" stroke-width=".9" fill="none"/><circle cx="2" cy="2.500" r="1.100" fill="#111"/><circle cx="10" cy="2.500" r="1.100" fill="#111"/></svg>
<span class="t tr" style="letter-spacing:-0.04px;left:55.6px;top:352.7px">M-φ要素の定義</span>
<svg width="7" height="7" viewBox="0 0 7 7" style="left:25.5px;top:366.8px"><rect x=".5" y=".5" width="6" height="6" fill="#fdfdfd" stroke="#b3bac4" stroke-width="1"/><path d="M2 3.500h3M3.500 2v3" stroke="#66758e" stroke-width="1"/></svg>
<i style="left:33.0px;top:369.8px;width:6.0px;height:1px;background:repeating-linear-gradient(90deg,#cfcfcf 0,#cfcfcf 1px,transparent 1px,transparent 2px)"></i>
<svg width="12" height="12" viewBox="0 0 12 12" style="left:40px;top:364.3px"><ellipse cx="6" cy="6.500" rx="5" ry="4" fill="#e36a5a" stroke="#7a1a1a" stroke-width=".9"/><path d="M1 6.500h10M4 3v7M8 3v7" stroke="#7a1a1a" stroke-width=".7"/><path d="M2 1.500h8" stroke="#111" stroke-width="1"/></svg>
<span class="t tr" style="letter-spacing:-0.90px;left:55.6px;top:365.7px">ファイバー要素の定義</span>
<svg width="7" height="7" viewBox="0 0 7 7" style="left:25.5px;top:379.9px"><rect x=".5" y=".5" width="6" height="6" fill="#fdfdfd" stroke="#b3bac4" stroke-width="1"/><path d="M2 3.500h3M3.500 2v3" stroke="#66758e" stroke-width="1"/></svg>
<i style="left:33.0px;top:382.9px;width:6.0px;height:1px;background:repeating-linear-gradient(90deg,#cfcfcf 0,#cfcfcf 1px,transparent 1px,transparent 2px)"></i>
<svg width="12" height="12" viewBox="0 0 12 12" style="left:40px;top:377.4px"><rect x="1.500" y="2.500" width="8" height="8" fill="#8a8a8a" stroke="#111" stroke-width="1"/><path d="M1.500 2.500l1.500-1.500h8v8l-1.500 1.500" fill="#c8c8c8" stroke="#111" stroke-width=".8"/></svg>
<span class="t tr" style="letter-spacing:-0.47px;left:55.6px;top:378.8px">平板要素の定義</span>
<svg width="7" height="7" viewBox="0 0 7 7" style="left:25.5px;top:392.9px"><rect x=".5" y=".5" width="6" height="6" fill="#fdfdfd" stroke="#b3bac4" stroke-width="1"/><path d="M2 3.500h3M3.500 2v3" stroke="#66758e" stroke-width="1"/></svg>
<i style="left:33.0px;top:395.9px;width:6.0px;height:1px;background:repeating-linear-gradient(90deg,#cfcfcf 0,#cfcfcf 1px,transparent 1px,transparent 2px)"></i>
<svg width="12" height="12" viewBox="0 0 12 12" style="left:40px;top:390.4px"><path d="M.8 1.500h10.400v3l-2 1v4l-1.200 1.700H4l-1.200-1.700v-4l-2-1z" fill="#f2f2f2" stroke="#222" stroke-width=".9"/><path d="M2.500 3h7" stroke="#222" stroke-width=".9" stroke-dasharray="1 1"/><rect x="6.500" y="6" width="5" height="4" fill="#e04a2a" stroke="#7a1a1a" stroke-width=".5"/><path d="M3 8l1.500 2 2-4" stroke="#1a8a2a" stroke-width="1" fill="none"/></svg>
<span class="t tr" style="letter-spacing:-0.62px;left:55.6px;top:391.8px">断面計算</span>
<svg width="7" height="7" viewBox="0 0 7 7" style="left:25.5px;top:405.9px"><rect x=".5" y=".5" width="6" height="6" fill="#fdfdfd" stroke="#b3bac4" stroke-width="1"/><path d="M2 3.500h3M3.500 2v3" stroke="#66758e" stroke-width="1"/></svg>
<i style="left:33.0px;top:408.9px;width:6.0px;height:1px;background:repeating-linear-gradient(90deg,#cfcfcf 0,#cfcfcf 1px,transparent 1px,transparent 2px)"></i>
<svg width="12" height="12" viewBox="0 0 12 12" style="left:40px;top:403.4px"><path d="M2 7V4.500q0-2 2-2h4q2 0 2 2V7z" fill="#3a78d8" stroke="#12306a" stroke-width=".8"/><rect x="1" y="6" width="10" height="2.500" fill="#2a58b8" stroke="#12306a" stroke-width=".6"/><circle cx="3.500" cy="9.500" r="1.500" fill="#111"/><circle cx="8.500" cy="9.500" r="1.500" fill="#111"/><path d="M0 11.500h12" stroke="#111" stroke-width=".8"/></svg>
<span class="t tr" style="letter-spacing:-0.30px;left:55.6px;top:404.8px">活荷重の定義</span>
<svg width="7" height="7" viewBox="0 0 7 7" style="left:25.5px;top:419.0px"><rect x=".5" y=".5" width="6" height="6" fill="#fdfdfd" stroke="#b3bac4" stroke-width="1"/><path d="M2 3.500h3M3.500 2v3" stroke="#66758e" stroke-width="1"/></svg>
<i style="left:33.0px;top:422.0px;width:6.0px;height:1px;background:repeating-linear-gradient(90deg,#cfcfcf 0,#cfcfcf 1px,transparent 1px,transparent 2px)"></i>
<svg width="12" height="12" viewBox="0 0 12 12" style="left:40px;top:416.5px"><rect x="1" y="1" width="10" height="10" fill="#7a1414" stroke="#3a0808" stroke-width=".8"/><rect x="3.500" y="3.500" width="5" height="5" fill="#d9b4b4"/></svg>
<span class="t tr" style="letter-spacing:-0.33px;left:55.6px;top:417.9px">鋼製部材のひずみ照査の定義</span>
<div id="vp"></div>
<svg id="bld" width="800" height="503" viewBox="0 0 800 503" style="left:0;top:0">
<polygon points="513.0,141.7 518.0,143.4 518.0,374.9 513.0,373.2" fill="#415a5e"/><polygon points="518.0,143.4 523.0,141.7 523.0,373.2 518.0,374.9" fill="#3d5659"/><polygon points="513.0,141.7 518.0,140.0 523.0,141.7 518.0,143.4" fill="#466064"/><polygon points="513.0,141.7 518.0,140.0 523.0,141.7 523.0,373.2 518.0,374.9 513.0,373.2" class="e"/>
<polygon points="518.1,333.2 545.3,342.5 545.3,349.1 518.1,339.8" fill="#415a5e"/><polygon points="545.3,342.5 550.1,340.9 550.1,347.5 545.3,349.1" fill="#3d5659"/><polygon points="518.1,333.2 522.9,331.6 550.1,340.9 545.3,342.5" fill="#466064"/><polygon points="518.1,333.2 522.9,331.6 550.1,340.9 550.1,347.5 545.3,349.1 518.1,339.8" class="e"/>
<polygon points="470.0,346.1 474.8,347.7 474.8,354.3 470.0,352.7" fill="#415a5e"/><polygon points="474.8,347.7 517.9,333.2 517.9,339.8 474.8,354.3" fill="#3d5659"/><polygon points="470.0,346.1 513.1,331.6 517.9,333.2 474.8,347.7" fill="#466064"/><polygon points="470.0,346.1 513.1,331.6 517.9,333.2 517.9,339.8 474.8,354.3 470.0,352.7" class="e"/>
<polygon points="471.0,338.2 473.8,339.2 473.8,347.4 471.0,346.4" fill="#415a5e"/><polygon points="473.8,339.2 516.9,324.7 516.9,332.9 473.8,347.4" fill="#3d5659"/><polygon points="471.0,338.2 514.1,323.7 516.9,324.7 473.8,339.2" fill="#466064"/><polygon points="471.0,338.2 514.1,323.7 516.9,324.7 516.9,332.9 473.8,347.4 471.0,346.4" class="e"/>
<polygon points="518.1,294.9 545.3,304.1 545.3,310.7 518.1,301.5" fill="#415a5e"/><polygon points="545.3,304.1 550.1,302.5 550.1,309.1 545.3,310.7" fill="#3d5659"/><polygon points="518.1,294.9 522.9,293.2 550.1,302.5 545.3,304.1" fill="#466064"/><polygon points="518.1,294.9 522.9,293.2 550.1,302.5 550.1,309.1 545.3,310.7 518.1,301.5" class="e"/>
<polygon points="549.6,341.0 568.1,347.3 568.1,353.9 549.6,347.6" fill="#3f565a"/><polygon points="568.1,347.3 568.6,347.1 568.6,353.7 568.1,353.9" fill="#3c5356"/><polygon points="549.6,341.0 550.1,340.9 568.6,347.1 568.1,347.3" fill="#445c60"/><polygon points="549.6,341.0 550.1,340.9 568.6,347.1 568.6,353.7 568.1,353.9 549.6,347.6" class="e"/>
<polygon points="470.0,307.7 474.8,309.4 474.8,316.0 470.0,314.3" fill="#415a5e"/><polygon points="474.8,309.4 517.9,294.9 517.9,301.5 474.8,316.0" fill="#3d5659"/><polygon points="470.0,307.7 513.1,293.2 517.9,294.9 474.8,309.4" fill="#466064"/><polygon points="470.0,307.7 513.1,293.2 517.9,294.9 517.9,301.5 474.8,316.0 470.0,314.3" class="e"/>
<polygon points="471.0,299.9 473.8,300.8 473.8,309.0 471.0,308.1" fill="#415a5e"/><polygon points="473.8,300.8 516.9,286.3 516.9,294.5 473.8,309.0" fill="#3d5659"/><polygon points="471.0,299.9 514.1,285.4 516.9,286.3 473.8,300.8" fill="#466064"/><polygon points="471.0,299.9 514.1,285.4 516.9,286.3 516.9,294.5 473.8,309.0 471.0,308.1" class="e"/>
<polygon points="518.1,256.5 545.3,265.8 545.3,272.4 518.1,263.1" fill="#415a5e"/><polygon points="545.3,265.8 550.1,264.2 550.1,270.8 545.3,272.4" fill="#3d5659"/><polygon points="518.1,256.5 522.9,254.9 550.1,264.2 545.3,265.8" fill="#466064"/><polygon points="518.1,256.5 522.9,254.9 550.1,264.2 550.1,270.8 545.3,272.4 518.1,263.1" class="e"/>
<polygon points="549.6,302.7 568.1,309.0 568.1,315.6 549.6,309.3" fill="#3f565a"/><polygon points="568.1,309.0 568.6,308.8 568.6,315.4 568.1,315.6" fill="#3c5356"/><polygon points="549.6,302.7 550.1,302.5 568.6,308.8 568.1,309.0" fill="#445c60"/><polygon points="549.6,302.7 550.1,302.5 568.6,308.8 568.6,315.4 568.1,315.6 549.6,309.3" class="e"/>
<polygon points="470.0,269.4 474.8,271.0 474.8,277.6 470.0,276.0" fill="#415a5e"/><polygon points="474.8,271.0 517.9,256.5 517.9,263.1 474.8,277.6" fill="#3d5659"/><polygon points="470.0,269.4 513.1,254.9 517.9,256.5 474.8,271.0" fill="#466064"/><polygon points="470.0,269.4 513.1,254.9 517.9,256.5 517.9,263.1 474.8,277.6 470.0,276.0" class="e"/>
<polygon points="568.1,347.3 587.3,353.9 587.3,360.5 568.1,353.9" fill="#3f565a"/><polygon points="587.3,353.9 587.8,353.7 587.8,360.3 587.3,360.5" fill="#3c5356"/><polygon points="568.1,347.3 568.6,347.1 587.8,353.7 587.3,353.9" fill="#445c60"/><polygon points="568.1,347.3 568.6,347.1 587.8,353.7 587.8,360.3 587.3,360.5 568.1,353.9" class="e"/>
<polygon points="471.0,261.5 473.8,262.5 473.8,270.7 471.0,269.7" fill="#415a5e"/><polygon points="473.8,262.5 516.9,248.0 516.9,256.2 473.8,270.7" fill="#3d5659"/><polygon points="471.0,261.5 514.1,247.0 516.9,248.0 473.8,262.5" fill="#466064"/><polygon points="471.0,261.5 514.1,247.0 516.9,248.0 516.9,256.2 473.8,270.7 471.0,269.7" class="e"/>
<polygon points="518.1,218.2 545.3,227.4 545.3,234.0 518.1,224.8" fill="#415a5e"/><polygon points="545.3,227.4 550.1,225.8 550.1,232.4 545.3,234.0" fill="#3d5659"/><polygon points="518.1,218.2 522.9,216.5 550.1,225.8 545.3,227.4" fill="#466064"/><polygon points="518.1,218.2 522.9,216.5 550.1,225.8 550.1,232.4 545.3,234.0 518.1,224.8" class="e"/>
<polygon points="549.6,264.3 568.1,270.6 568.1,277.2 549.6,270.9" fill="#3f565a"/><polygon points="568.1,270.6 568.6,270.4 568.6,277.0 568.1,277.2" fill="#3c5356"/><polygon points="549.6,264.3 550.1,264.2 568.6,270.4 568.1,270.6" fill="#445c60"/><polygon points="549.6,264.3 550.1,264.2 568.6,270.4 568.6,277.0 568.1,277.2 549.6,270.9" class="e"/>
<polygon points="470.0,231.0 474.8,232.7 474.8,239.3 470.0,237.6" fill="#415a5e"/><polygon points="474.8,232.7 517.9,218.2 517.9,224.8 474.8,239.3" fill="#3d5659"/><polygon points="470.0,231.0 513.1,216.5 517.9,218.2 474.8,232.7" fill="#466064"/><polygon points="470.0,231.0 513.1,216.5 517.9,218.2 517.9,224.8 474.8,239.3 470.0,237.6" class="e"/>
<polygon points="568.1,309.0 587.3,315.5 587.3,322.1 568.1,315.6" fill="#3f565a"/><polygon points="587.3,315.5 587.8,315.3 587.8,321.9 587.3,322.1" fill="#3c5356"/><polygon points="568.1,309.0 568.6,308.8 587.8,315.3 587.3,315.5" fill="#445c60"/><polygon points="568.1,309.0 568.6,308.8 587.8,315.3 587.8,321.9 587.3,322.1 568.1,315.6" class="e"/>
<polygon points="471.0,223.2 473.8,224.1 473.8,232.3 471.0,231.4" fill="#415a5e"/><polygon points="473.8,224.1 516.9,209.6 516.9,217.8 473.8,232.3" fill="#3d5659"/><polygon points="471.0,223.2 514.1,208.7 516.9,209.6 473.8,224.1" fill="#466064"/><polygon points="471.0,223.2 514.1,208.7 516.9,209.6 516.9,217.8 473.8,232.3 471.0,231.4" class="e"/>
<polygon points="518.1,179.8 545.3,189.1 545.3,195.7 518.1,186.4" fill="#415a5e"/><polygon points="545.3,189.1 550.1,187.5 550.1,194.1 545.3,195.7" fill="#3d5659"/><polygon points="518.1,179.8 522.9,178.2 550.1,187.5 545.3,189.1" fill="#466064"/><polygon points="518.1,179.8 522.9,178.2 550.1,187.5 550.1,194.1 545.3,195.7 518.1,186.4" class="e"/>
<polygon points="549.6,226.0 568.1,232.3 568.1,238.9 549.6,232.6" fill="#3f565a"/><polygon points="568.1,232.3 568.6,232.1 568.6,238.7 568.1,238.9" fill="#3c5356"/><polygon points="549.6,226.0 550.1,225.8 568.6,232.1 568.1,232.3" fill="#445c60"/><polygon points="549.6,226.0 550.1,225.8 568.6,232.1 568.6,238.7 568.1,238.9 549.6,232.6" class="e"/>
<polygon points="470.0,192.7 474.8,194.3 474.8,200.9 470.0,199.3" fill="#415a5e"/><polygon points="474.8,194.3 517.9,179.8 517.9,186.4 474.8,200.9" fill="#3d5659"/><polygon points="470.0,192.7 513.1,178.2 517.9,179.8 474.8,194.3" fill="#466064"/><polygon points="470.0,192.7 513.1,178.2 517.9,179.8 517.9,186.4 474.8,200.9 470.0,199.3" class="e"/>
<polygon points="568.1,270.6 587.3,277.2 587.3,283.8 568.1,277.2" fill="#3f565a"/><polygon points="587.3,277.2 587.8,277.0 587.8,283.6 587.3,283.8" fill="#3c5356"/><polygon points="568.1,270.6 568.6,270.4 587.8,277.0 587.3,277.2" fill="#445c60"/><polygon points="568.1,270.6 568.6,270.4 587.8,277.0 587.8,283.6 587.3,283.8 568.1,277.2" class="e"/>
<polygon points="471.0,184.8 473.8,185.8 473.8,194.0 471.0,193.0" fill="#415a5e"/><polygon points="473.8,185.8 516.9,171.3 516.9,179.5 473.8,194.0" fill="#3d5659"/><polygon points="471.0,184.8 514.1,170.3 516.9,171.3 473.8,185.8" fill="#466064"/><polygon points="471.0,184.8 514.1,170.3 516.9,171.3 516.9,179.5 473.8,194.0 471.0,193.0" class="e"/>
<polygon points="518.1,143.4 545.3,152.6 545.3,157.3 518.1,148.1" fill="#415a5e"/><polygon points="545.3,152.6 550.1,151.0 550.1,155.7 545.3,157.3" fill="#3d5659"/><polygon points="518.1,143.4 522.9,141.7 550.1,151.0 545.3,152.6" fill="#466064"/><polygon points="518.1,143.4 522.9,141.7 550.1,151.0 550.1,155.7 545.3,157.3 518.1,148.1" class="e"/>
<polygon points="549.6,187.6 568.1,193.9 568.1,200.5 549.6,194.2" fill="#3f565a"/><polygon points="568.1,193.9 568.6,193.7 568.6,200.3 568.1,200.5" fill="#3c5356"/><polygon points="549.6,187.6 550.1,187.5 568.6,193.7 568.1,193.9" fill="#445c60"/><polygon points="549.6,187.6 550.1,187.5 568.6,193.7 568.6,200.3 568.1,200.5 549.6,194.2" class="e"/>
<polygon points="470.0,156.2 474.8,157.9 474.8,162.6 470.0,160.9" fill="#415a5e"/><polygon points="474.8,157.9 517.9,143.4 517.9,148.1 474.8,162.6" fill="#3d5659"/><polygon points="470.0,156.2 513.1,141.7 517.9,143.4 474.8,157.9" fill="#466064"/><polygon points="470.0,156.2 513.1,141.7 517.9,143.4 517.9,148.1 474.8,162.6 470.0,160.9" class="e"/>
<polygon points="464.9,157.9 469.9,159.6 469.9,391.1 464.9,389.4" fill="#415a5e"/><polygon points="469.9,159.6 474.9,157.9 474.9,389.4 469.9,391.1" fill="#3d5659"/><polygon points="464.9,157.9 469.9,156.2 474.9,157.9 469.9,159.6" fill="#466064"/><polygon points="464.9,157.9 469.9,156.2 474.9,157.9 474.9,389.4 469.9,391.1 464.9,389.4" class="e"/>
<polygon points="421.9,362.3 426.7,363.9 426.7,370.5 421.9,368.9" fill="#415a5e"/><polygon points="426.7,363.9 469.8,349.4 469.8,356.0 426.7,370.5" fill="#3d5659"/><polygon points="421.9,362.3 465.0,347.8 469.8,349.4 426.7,363.9" fill="#466064"/><polygon points="421.9,362.3 465.0,347.8 469.8,349.4 469.8,356.0 426.7,370.5 421.9,368.9" class="e"/>
<polygon points="470.0,349.4 513.1,364.1 513.1,370.7 470.0,356.0" fill="#415a5e"/><polygon points="513.1,364.1 518.0,362.5 518.0,369.1 513.1,370.7" fill="#3d5659"/><polygon points="470.0,349.4 474.8,347.8 518.0,362.5 513.1,364.1" fill="#466064"/><polygon points="470.0,349.4 474.8,347.8 518.0,362.5 518.0,369.1 513.1,370.7 470.0,356.0" class="e"/>
<polygon points="422.9,354.4 425.7,355.4 425.7,363.6 422.9,362.6" fill="#415a5e"/><polygon points="425.7,355.4 468.8,340.9 468.8,349.1 425.7,363.6" fill="#3d5659"/><polygon points="422.9,354.4 466.0,339.9 468.8,340.9 425.7,355.4" fill="#466064"/><polygon points="422.9,354.4 466.0,339.9 468.8,340.9 468.8,349.1 425.7,363.6 422.9,362.6" class="e"/>
<polygon points="421.9,323.9 426.7,325.6 426.7,332.2 421.9,330.5" fill="#415a5e"/><polygon points="426.7,325.6 469.8,311.1 469.8,317.7 426.7,332.2" fill="#3d5659"/><polygon points="421.9,323.9 465.0,309.4 469.8,311.1 426.7,325.6" fill="#466064"/><polygon points="421.9,323.9 465.0,309.4 469.8,311.1 469.8,317.7 426.7,332.2 421.9,330.5" class="e"/>
<polygon points="470.0,311.1 513.1,325.8 513.1,332.4 470.0,317.7" fill="#415a5e"/><polygon points="513.1,325.8 518.0,324.1 518.0,330.7 513.1,332.4" fill="#3d5659"/><polygon points="470.0,311.1 474.8,309.4 518.0,324.1 513.1,325.8" fill="#466064"/><polygon points="470.0,311.1 474.8,309.4 518.0,324.1 518.0,330.7 513.1,332.4 470.0,317.7" class="e"/>
<polygon points="422.9,316.1 425.7,317.0 425.7,325.2 422.9,324.3" fill="#415a5e"/><polygon points="425.7,317.0 468.8,302.5 468.8,310.7 425.7,325.2" fill="#3d5659"/><polygon points="422.9,316.1 466.0,301.6 468.8,302.5 425.7,317.0" fill="#466064"/><polygon points="422.9,316.1 466.0,301.6 468.8,302.5 468.8,310.7 425.7,325.2 422.9,324.3" class="e"/>
<polygon points="568.1,232.3 587.3,238.8 587.3,245.4 568.1,238.9" fill="#3f565a"/><polygon points="587.3,238.8 587.8,238.6 587.8,245.2 587.3,245.4" fill="#3c5356"/><polygon points="568.1,232.3 568.6,232.1 587.8,238.6 587.3,238.8" fill="#445c60"/><polygon points="568.1,232.3 568.6,232.1 587.8,238.6 587.8,245.2 587.3,245.4 568.1,238.9" class="e"/>
<polygon points="421.9,285.6 426.7,287.2 426.7,293.8 421.9,292.2" fill="#415a5e"/><polygon points="426.7,287.2 469.8,272.7 469.8,279.3 426.7,293.8" fill="#3d5659"/><polygon points="421.9,285.6 465.0,271.1 469.8,272.7 426.7,287.2" fill="#466064"/><polygon points="421.9,285.6 465.0,271.1 469.8,272.7 469.8,279.3 426.7,293.8 421.9,292.2" class="e"/>
<polygon points="470.0,272.7 513.1,287.4 513.1,294.0 470.0,279.3" fill="#415a5e"/><polygon points="513.1,287.4 518.0,285.8 518.0,292.4 513.1,294.0" fill="#3d5659"/><polygon points="470.0,272.7 474.8,271.1 518.0,285.8 513.1,287.4" fill="#466064"/><polygon points="470.0,272.7 474.8,271.1 518.0,285.8 518.0,292.4 513.1,294.0 470.0,279.3" class="e"/>
<polygon points="422.9,277.7 425.7,278.7 425.7,286.9 422.9,285.9" fill="#415a5e"/><polygon points="425.7,278.7 468.8,264.2 468.8,272.4 425.7,286.9" fill="#3d5659"/><polygon points="422.9,277.7 466.0,263.2 468.8,264.2 425.7,278.7" fill="#466064"/><polygon points="422.9,277.7 466.0,263.2 468.8,264.2 468.8,272.4 425.7,286.9 422.9,285.9" class="e"/>
<polygon points="549.6,151.2 568.1,157.5 568.1,162.2 549.6,155.9" fill="#3f565a"/><polygon points="568.1,157.5 568.6,157.3 568.6,162.0 568.1,162.2" fill="#3c5356"/><polygon points="549.6,151.2 550.1,151.0 568.6,157.3 568.1,157.5" fill="#445c60"/><polygon points="549.6,151.2 550.1,151.0 568.6,157.3 568.6,162.0 568.1,162.2 549.6,155.9" class="e"/>
<polygon points="568.1,193.9 587.3,200.5 587.3,207.1 568.1,200.5" fill="#3f565a"/><polygon points="587.3,200.5 587.8,200.3 587.8,206.9 587.3,207.1" fill="#3c5356"/><polygon points="568.1,193.9 568.6,193.7 587.8,200.3 587.3,200.5" fill="#445c60"/><polygon points="568.1,193.9 568.6,193.7 587.8,200.3 587.8,206.9 587.3,207.1 568.1,200.5" class="e"/>
<polygon points="421.9,247.2 426.7,248.9 426.7,255.5 421.9,253.8" fill="#415a5e"/><polygon points="426.7,248.9 469.8,234.4 469.8,241.0 426.7,255.5" fill="#3d5659"/><polygon points="421.9,247.2 465.0,232.7 469.8,234.4 426.7,248.9" fill="#466064"/><polygon points="421.9,247.2 465.0,232.7 469.8,234.4 469.8,241.0 426.7,255.5 421.9,253.8" class="e"/>
<polygon points="470.0,234.4 513.1,249.1 513.1,255.7 470.0,241.0" fill="#415a5e"/><polygon points="513.1,249.1 518.0,247.4 518.0,254.0 513.1,255.7" fill="#3d5659"/><polygon points="470.0,234.4 474.8,232.7 518.0,247.4 513.1,249.1" fill="#466064"/><polygon points="470.0,234.4 474.8,232.7 518.0,247.4 518.0,254.0 513.1,255.7 470.0,241.0" class="e"/>
<polygon points="422.9,239.4 425.7,240.3 425.7,248.5 422.9,247.6" fill="#415a5e"/><polygon points="425.7,240.3 468.8,225.8 468.8,234.0 425.7,248.5" fill="#3d5659"/><polygon points="422.9,239.4 466.0,224.9 468.8,225.8 425.7,240.3" fill="#466064"/><polygon points="422.9,239.4 466.0,224.9 468.8,225.8 468.8,234.0 425.7,248.5 422.9,247.6" class="e"/>
<polygon points="568.1,157.5 587.3,164.0 587.3,168.7 568.1,162.2" fill="#3f565a"/><polygon points="587.3,164.0 587.8,163.8 587.8,168.5 587.3,168.7" fill="#3c5356"/><polygon points="568.1,157.5 568.6,157.3 587.8,163.8 587.3,164.0" fill="#445c60"/><polygon points="568.1,157.5 568.6,157.3 587.8,163.8 587.8,168.5 587.3,168.7 568.1,162.2" class="e"/>
<polygon points="545.8,152.5 583.5,165.3 583.5,396.8 545.8,384.0" fill="#3f565a"/><polygon points="583.5,165.3 587.3,164.0 587.3,395.5 583.5,396.8" fill="#3c5356"/><polygon points="545.8,152.5 549.6,151.2 587.3,164.0 583.5,165.3" fill="#466064"/><polygon points="545.8,152.5 549.6,151.2 587.3,164.0 587.3,395.5 583.5,396.8 545.8,384.0" class="e"/>
<polygon points="545.3,342.5 563.7,348.8 563.7,355.4 545.3,349.1" fill="#3f565a"/><polygon points="563.7,348.8 564.2,348.6 564.2,355.2 563.7,355.4" fill="#3c5356"/><polygon points="545.3,342.5 545.8,342.3 564.2,348.6 563.7,348.8" fill="#445c60"/><polygon points="545.3,342.5 545.8,342.3 564.2,348.6 564.2,355.2 563.7,355.4 545.3,349.1" class="e"/>
<polygon points="545.3,304.1 563.7,310.4 563.7,317.0 545.3,310.7" fill="#3f565a"/><polygon points="563.7,310.4 564.2,310.2 564.2,316.8 563.7,317.0" fill="#3c5356"/><polygon points="545.3,304.1 545.8,304.0 564.2,310.2 563.7,310.4" fill="#445c60"/><polygon points="545.3,304.1 545.8,304.0 564.2,310.2 564.2,316.8 563.7,317.0 545.3,310.7" class="e"/>
<polygon points="563.7,348.8 583.0,355.3 583.0,361.9 563.7,355.4" fill="#3f565a"/><polygon points="583.0,355.3 583.5,355.2 583.5,361.8 583.0,361.9" fill="#3c5356"/><polygon points="563.7,348.8 564.2,348.6 583.5,355.2 583.0,355.3" fill="#445c60"/><polygon points="563.7,348.8 564.2,348.6 583.5,355.2 583.5,361.8 583.0,361.9 563.7,355.4" class="e"/>
<polygon points="545.3,265.8 563.7,272.1 563.7,278.7 545.3,272.4" fill="#3f565a"/><polygon points="563.7,272.1 564.2,271.9 564.2,278.5 563.7,278.7" fill="#3c5356"/><polygon points="545.3,265.8 545.8,265.6 564.2,271.9 563.7,272.1" fill="#445c60"/><polygon points="545.3,265.8 545.8,265.6 564.2,271.9 564.2,278.5 563.7,278.7 545.3,272.4" class="e"/>
<polygon points="518.1,362.5 523.0,364.1 523.0,370.7 518.1,369.1" fill="#415a5e"/><polygon points="523.0,364.1 566.1,349.6 566.1,356.2 523.0,370.7" fill="#3d5659"/><polygon points="518.1,362.5 561.2,348.0 566.1,349.6 523.0,364.1" fill="#466064"/><polygon points="518.1,362.5 561.2,348.0 566.1,349.6 566.1,356.2 523.0,370.7 518.1,369.1" class="e"/>
<polygon points="563.7,310.4 583.0,317.0 583.0,323.6 563.7,317.0" fill="#3f565a"/><polygon points="583.0,317.0 583.5,316.8 583.5,323.4 583.0,323.6" fill="#3c5356"/><polygon points="563.7,310.4 564.2,310.2 583.5,316.8 583.0,317.0" fill="#445c60"/><polygon points="563.7,310.4 564.2,310.2 583.5,316.8 583.5,323.4 583.0,323.6 563.7,317.0" class="e"/>
<polygon points="583.0,355.3 609.4,364.3 609.4,370.9 583.0,361.9" fill="#415a5e"/><polygon points="609.4,364.3 614.2,362.7 614.2,369.3 609.4,370.9" fill="#3d5659"/><polygon points="583.0,355.3 587.8,353.7 614.2,362.7 609.4,364.3" fill="#466064"/><polygon points="583.0,355.3 587.8,353.7 614.2,362.7 614.2,369.3 609.4,370.9 583.0,361.9" class="e"/>
<polygon points="545.3,227.4 563.7,233.7 563.7,240.3 545.3,234.0" fill="#3f565a"/><polygon points="563.7,233.7 564.2,233.5 564.2,240.1 563.7,240.3" fill="#3c5356"/><polygon points="545.3,227.4 545.8,227.3 564.2,233.5 563.7,233.7" fill="#445c60"/><polygon points="545.3,227.4 545.8,227.3 564.2,233.5 564.2,240.1 563.7,240.3 545.3,234.0" class="e"/>
<polygon points="518.1,324.1 523.0,325.8 523.0,332.4 518.1,330.7" fill="#415a5e"/><polygon points="523.0,325.8 566.1,311.3 566.1,317.9 523.0,332.4" fill="#3d5659"/><polygon points="518.1,324.1 561.2,309.6 566.1,311.3 523.0,325.8" fill="#466064"/><polygon points="518.1,324.1 561.2,309.6 566.1,311.3 566.1,317.9 523.0,332.4 518.1,330.7" class="e"/>
<polygon points="563.7,272.1 583.0,278.6 583.0,285.2 563.7,278.7" fill="#3f565a"/><polygon points="583.0,278.6 583.5,278.5 583.5,285.1 583.0,285.2" fill="#3c5356"/><polygon points="563.7,272.1 564.2,271.9 583.5,278.5 583.0,278.6" fill="#445c60"/><polygon points="563.7,272.1 564.2,271.9 583.5,278.5 583.5,285.1 583.0,285.2 563.7,278.7" class="e"/>
<polygon points="583.0,317.0 609.4,326.0 609.4,332.6 583.0,323.6" fill="#415a5e"/><polygon points="609.4,326.0 614.2,324.3 614.2,330.9 609.4,332.6" fill="#3d5659"/><polygon points="583.0,317.0 587.8,315.3 614.2,324.3 609.4,326.0" fill="#466064"/><polygon points="583.0,317.0 587.8,315.3 614.2,324.3 614.2,330.9 609.4,332.6 583.0,323.6" class="e"/>
<polygon points="545.3,189.1 563.7,195.4 563.7,202.0 545.3,195.7" fill="#3f565a"/><polygon points="563.7,195.4 564.2,195.2 564.2,201.8 563.7,202.0" fill="#3c5356"/><polygon points="545.3,189.1 545.8,188.9 564.2,195.2 563.7,195.4" fill="#445c60"/><polygon points="545.3,189.1 545.8,188.9 564.2,195.2 564.2,201.8 563.7,202.0 545.3,195.7" class="e"/>
<polygon points="518.1,285.8 523.0,287.4 523.0,294.0 518.1,292.4" fill="#415a5e"/><polygon points="523.0,287.4 566.1,272.9 566.1,279.5 523.0,294.0" fill="#3d5659"/><polygon points="518.1,285.8 561.2,271.3 566.1,272.9 523.0,287.4" fill="#466064"/><polygon points="518.1,285.8 561.2,271.3 566.1,272.9 566.1,279.5 523.0,294.0 518.1,292.4" class="e"/>
<polygon points="563.7,233.7 583.0,240.3 583.0,246.9 563.7,240.3" fill="#3f565a"/><polygon points="583.0,240.3 583.5,240.1 583.5,246.7 583.0,246.9" fill="#3c5356"/><polygon points="563.7,233.7 564.2,233.5 583.5,240.1 583.0,240.3" fill="#445c60"/><polygon points="563.7,233.7 564.2,233.5 583.5,240.1 583.5,246.7 583.0,246.9 563.7,240.3" class="e"/>
<polygon points="583.0,278.6 609.4,287.6 609.4,294.2 583.0,285.2" fill="#415a5e"/><polygon points="609.4,287.6 614.2,286.0 614.2,292.6 609.4,294.2" fill="#3d5659"/><polygon points="583.0,278.6 587.8,277.0 614.2,286.0 609.4,287.6" fill="#466064"/><polygon points="583.0,278.6 587.8,277.0 614.2,286.0 614.2,292.6 609.4,294.2 583.0,285.2" class="e"/>
<polygon points="545.3,152.6 563.7,158.9 563.7,163.6 545.3,157.3" fill="#3f565a"/><polygon points="563.7,158.9 564.2,158.7 564.2,163.4 563.7,163.6" fill="#3c5356"/><polygon points="545.3,152.6 545.8,152.5 564.2,158.7 563.7,158.9" fill="#445c60"/><polygon points="545.3,152.6 545.8,152.5 564.2,158.7 564.2,163.4 563.7,163.6 545.3,157.3" class="e"/>
<polygon points="518.1,247.4 523.0,249.1 523.0,255.7 518.1,254.0" fill="#415a5e"/><polygon points="523.0,249.1 566.1,234.6 566.1,241.2 523.0,255.7" fill="#3d5659"/><polygon points="518.1,247.4 561.2,232.9 566.1,234.6 523.0,249.1" fill="#466064"/><polygon points="518.1,247.4 561.2,232.9 566.1,234.6 566.1,241.2 523.0,255.7 518.1,254.0" class="e"/>
<polygon points="563.7,195.4 583.0,201.9 583.0,208.5 563.7,202.0" fill="#3f565a"/><polygon points="583.0,201.9 583.5,201.8 583.5,208.4 583.0,208.5" fill="#3c5356"/><polygon points="563.7,195.4 564.2,195.2 583.5,201.8 583.0,201.9" fill="#445c60"/><polygon points="563.7,195.4 564.2,195.2 583.5,201.8 583.5,208.4 583.0,208.5 563.7,202.0" class="e"/>
<polygon points="583.0,240.3 609.4,249.3 609.4,255.9 583.0,246.9" fill="#415a5e"/><polygon points="609.4,249.3 614.2,247.6 614.2,254.2 609.4,255.9" fill="#3d5659"/><polygon points="583.0,240.3 587.8,238.6 614.2,247.6 609.4,249.3" fill="#466064"/><polygon points="583.0,240.3 587.8,238.6 614.2,247.6 614.2,254.2 609.4,255.9 583.0,246.9" class="e"/>
<polygon points="421.9,208.9 426.7,210.5 426.7,217.1 421.9,215.5" fill="#415a5e"/><polygon points="426.7,210.5 469.8,196.0 469.8,202.6 426.7,217.1" fill="#3d5659"/><polygon points="421.9,208.9 465.0,194.4 469.8,196.0 426.7,210.5" fill="#466064"/><polygon points="421.9,208.9 465.0,194.4 469.8,196.0 469.8,202.6 426.7,217.1 421.9,215.5" class="e"/>
<polygon points="518.1,209.1 523.0,210.7 523.0,217.3 518.1,215.7" fill="#415a5e"/><polygon points="523.0,210.7 566.1,196.2 566.1,202.8 523.0,217.3" fill="#3d5659"/><polygon points="518.1,209.1 561.2,194.6 566.1,196.2 523.0,210.7" fill="#466064"/><polygon points="518.1,209.1 561.2,194.6 566.1,196.2 566.1,202.8 523.0,217.3 518.1,215.7" class="e"/>
<polygon points="470.0,196.0 513.1,210.7 513.1,217.3 470.0,202.6" fill="#415a5e"/><polygon points="513.1,210.7 518.0,209.1 518.0,215.7 513.1,217.3" fill="#3d5659"/><polygon points="470.0,196.0 474.8,194.4 518.0,209.1 513.1,210.7" fill="#466064"/><polygon points="470.0,196.0 474.8,194.4 518.0,209.1 518.0,215.7 513.1,217.3 470.0,202.6" class="e"/>
<polygon points="563.7,158.9 583.0,165.5 583.0,170.2 563.7,163.6" fill="#3f565a"/><polygon points="583.0,165.5 583.5,165.3 583.5,170.0 583.0,170.2" fill="#3c5356"/><polygon points="563.7,158.9 564.2,158.7 583.5,165.3 583.0,165.5" fill="#445c60"/><polygon points="563.7,158.9 564.2,158.7 583.5,165.3 583.5,170.0 583.0,170.2 563.7,163.6" class="e"/>
<polygon points="422.9,201.0 425.7,202.0 425.7,210.2 422.9,209.2" fill="#415a5e"/><polygon points="425.7,202.0 468.8,187.5 468.8,195.7 425.7,210.2" fill="#3d5659"/><polygon points="422.9,201.0 466.0,186.5 468.8,187.5 425.7,202.0" fill="#466064"/><polygon points="422.9,201.0 466.0,186.5 468.8,187.5 468.8,195.7 425.7,210.2 422.9,209.2" class="e"/>
<polygon points="583.0,201.9 609.4,210.9 609.4,217.5 583.0,208.5" fill="#415a5e"/><polygon points="609.4,210.9 614.2,209.3 614.2,215.9 609.4,217.5" fill="#3d5659"/><polygon points="583.0,201.9 587.8,200.3 614.2,209.3 609.4,210.9" fill="#466064"/><polygon points="583.0,201.9 587.8,200.3 614.2,209.3 614.2,215.9 609.4,217.5 583.0,208.5" class="e"/>
<polygon points="421.9,172.4 426.7,174.1 426.7,178.8 421.9,177.1" fill="#415a5e"/><polygon points="426.7,174.1 469.8,159.6 469.8,164.3 426.7,178.8" fill="#3d5659"/><polygon points="421.9,172.4 465.0,157.9 469.8,159.6 426.7,174.1" fill="#466064"/><polygon points="421.9,172.4 465.0,157.9 469.8,159.6 469.8,164.3 426.7,178.8 421.9,177.1" class="e"/>
<polygon points="416.8,174.1 421.8,175.8 421.8,407.3 416.8,405.6" fill="#415a5e"/><polygon points="421.8,175.8 426.8,174.1 426.8,405.6 421.8,407.3" fill="#3d5659"/><polygon points="416.8,174.1 421.8,172.4 426.8,174.1 421.8,175.8" fill="#466064"/><polygon points="416.8,174.1 421.8,172.4 426.8,174.1 426.8,405.6 421.8,407.3 416.8,405.6" class="e"/>
<polygon points="373.8,378.5 378.6,380.1 378.6,386.7 373.8,385.1" fill="#415a5e"/><polygon points="378.6,380.1 421.7,365.6 421.7,372.2 378.6,386.7" fill="#3d5659"/><polygon points="373.8,378.5 416.9,364.0 421.7,365.6 378.6,380.1" fill="#466064"/><polygon points="373.8,378.5 416.9,364.0 421.7,365.6 421.7,372.2 378.6,386.7 373.8,385.1" class="e"/>
<polygon points="421.9,365.6 465.0,380.3 465.0,386.9 421.9,372.2" fill="#415a5e"/><polygon points="465.0,380.3 469.9,378.7 469.9,385.3 465.0,386.9" fill="#3d5659"/><polygon points="421.9,365.6 426.7,364.0 469.9,378.7 465.0,380.3" fill="#466064"/><polygon points="421.9,365.6 426.7,364.0 469.9,378.7 469.9,385.3 465.0,386.9 421.9,372.2" class="e"/>
<polygon points="374.8,370.6 377.6,371.6 377.6,379.8 374.8,378.8" fill="#415a5e"/><polygon points="377.6,371.6 420.7,357.1 420.7,365.3 377.6,379.8" fill="#3d5659"/><polygon points="374.8,370.6 417.9,356.1 420.7,357.1 377.6,371.6" fill="#466064"/><polygon points="374.8,370.6 417.9,356.1 420.7,357.1 420.7,365.3 377.6,379.8 374.8,378.8" class="e"/>
<polygon points="373.8,340.1 378.6,341.8 378.6,348.4 373.8,346.7" fill="#415a5e"/><polygon points="378.6,341.8 421.7,327.3 421.7,333.9 378.6,348.4" fill="#3d5659"/><polygon points="373.8,340.1 416.9,325.6 421.7,327.3 378.6,341.8" fill="#466064"/><polygon points="373.8,340.1 416.9,325.6 421.7,327.3 421.7,333.9 378.6,348.4 373.8,346.7" class="e"/>
<polygon points="421.9,327.3 465.0,342.0 465.0,348.6 421.9,333.9" fill="#415a5e"/><polygon points="465.0,342.0 469.9,340.3 469.9,346.9 465.0,348.6" fill="#3d5659"/><polygon points="421.9,327.3 426.7,325.6 469.9,340.3 465.0,342.0" fill="#466064"/><polygon points="421.9,327.3 426.7,325.6 469.9,340.3 469.9,346.9 465.0,348.6 421.9,333.9" class="e"/>
<polygon points="374.8,332.3 377.6,333.2 377.6,341.4 374.8,340.5" fill="#415a5e"/><polygon points="377.6,333.2 420.7,318.7 420.7,326.9 377.6,341.4" fill="#3d5659"/><polygon points="374.8,332.3 417.9,317.8 420.7,318.7 377.6,333.2" fill="#466064"/><polygon points="374.8,332.3 417.9,317.8 420.7,318.7 420.7,326.9 377.6,341.4 374.8,340.5" class="e"/>
<polygon points="518.1,172.6 523.0,174.3 523.0,179.0 518.1,177.3" fill="#415a5e"/><polygon points="523.0,174.3 566.1,159.8 566.1,164.5 523.0,179.0" fill="#3d5659"/><polygon points="518.1,172.6 561.2,158.1 566.1,159.8 523.0,174.3" fill="#466064"/><polygon points="518.1,172.6 561.2,158.1 566.1,159.8 566.1,164.5 523.0,179.0 518.1,177.3" class="e"/>
<polygon points="470.0,159.6 513.1,174.3 513.1,179.0 470.0,164.3" fill="#415a5e"/><polygon points="513.1,174.3 518.0,172.6 518.0,177.3 513.1,179.0" fill="#3d5659"/><polygon points="470.0,159.6 474.8,157.9 518.0,172.6 513.1,174.3" fill="#466064"/><polygon points="470.0,159.6 474.8,157.9 518.0,172.6 518.0,177.3 513.1,179.0 470.0,164.3" class="e"/>
<polygon points="513.0,174.3 518.1,176.0 518.1,407.5 513.0,405.8" fill="#415a5e"/><polygon points="518.1,176.0 523.1,174.3 523.1,405.8 518.1,407.5" fill="#3d5659"/><polygon points="513.0,174.3 518.0,172.6 523.1,174.3 518.1,176.0" fill="#466064"/><polygon points="513.0,174.3 518.0,172.6 523.1,174.3 523.1,405.8 518.1,407.5 513.0,405.8" class="e"/>
<polygon points="470.0,378.7 470.5,378.9 470.5,385.5 470.0,385.3" fill="#3f565a"/><polygon points="470.5,378.9 513.6,364.3 513.6,370.9 470.5,385.5" fill="#3c5356"/><polygon points="470.0,378.7 513.1,364.2 513.6,364.3 470.5,378.9" fill="#445c60"/><polygon points="470.0,378.7 513.1,364.2 513.6,364.3 513.6,370.9 470.5,385.5 470.0,385.3" class="e"/>
<polygon points="518.1,365.8 561.3,380.5 561.3,387.1 518.1,372.4" fill="#415a5e"/><polygon points="561.3,380.5 566.1,378.9 566.1,385.5 561.3,387.1" fill="#3d5659"/><polygon points="518.1,365.8 523.0,364.2 566.1,378.9 561.3,380.5" fill="#466064"/><polygon points="518.1,365.8 523.0,364.2 566.1,378.9 566.1,385.5 561.3,387.1 518.1,372.4" class="e"/>
<polygon points="470.0,340.3 470.5,340.5 470.5,347.1 470.0,346.9" fill="#3f565a"/><polygon points="470.5,340.5 513.6,326.0 513.6,332.6 470.5,347.1" fill="#3c5356"/><polygon points="470.0,340.3 513.1,325.8 513.6,326.0 470.5,340.5" fill="#445c60"/><polygon points="470.0,340.3 513.1,325.8 513.6,326.0 513.6,332.6 470.5,347.1 470.0,346.9" class="e"/>
<polygon points="518.1,327.5 561.3,342.2 561.3,348.8 518.1,334.1" fill="#415a5e"/><polygon points="561.3,342.2 566.1,340.5 566.1,347.1 561.3,348.8" fill="#3d5659"/><polygon points="518.1,327.5 523.0,325.8 566.1,340.5 561.3,342.2" fill="#466064"/><polygon points="518.1,327.5 523.0,325.8 566.1,340.5 566.1,347.1 561.3,348.8 518.1,334.1" class="e"/>
<polygon points="470.0,302.0 470.5,302.2 470.5,308.8 470.0,308.6" fill="#3f565a"/><polygon points="470.5,302.2 513.6,287.6 513.6,294.2 470.5,308.8" fill="#3c5356"/><polygon points="470.0,302.0 513.1,287.5 513.6,287.6 470.5,302.2" fill="#445c60"/><polygon points="470.0,302.0 513.1,287.5 513.6,287.6 513.6,294.2 470.5,308.8 470.0,308.6" class="e"/>
<polygon points="373.8,301.8 378.6,303.4 378.6,310.0 373.8,308.4" fill="#415a5e"/><polygon points="378.6,303.4 421.7,288.9 421.7,295.5 378.6,310.0" fill="#3d5659"/><polygon points="373.8,301.8 416.9,287.3 421.7,288.9 378.6,303.4" fill="#466064"/><polygon points="373.8,301.8 416.9,287.3 421.7,288.9 421.7,295.5 378.6,310.0 373.8,308.4" class="e"/>
<polygon points="421.9,288.9 465.0,303.6 465.0,310.2 421.9,295.5" fill="#415a5e"/><polygon points="465.0,303.6 469.9,302.0 469.9,308.6 465.0,310.2" fill="#3d5659"/><polygon points="421.9,288.9 426.7,287.3 469.9,302.0 465.0,303.6" fill="#466064"/><polygon points="421.9,288.9 426.7,287.3 469.9,302.0 469.9,308.6 465.0,310.2 421.9,295.5" class="e"/>
<polygon points="518.1,289.1 561.3,303.8 561.3,310.4 518.1,295.7" fill="#415a5e"/><polygon points="561.3,303.8 566.1,302.2 566.1,308.8 561.3,310.4" fill="#3d5659"/><polygon points="518.1,289.1 523.0,287.5 566.1,302.2 561.3,303.8" fill="#466064"/><polygon points="518.1,289.1 523.0,287.5 566.1,302.2 566.1,308.8 561.3,310.4 518.1,295.7" class="e"/>
<polygon points="374.8,293.9 377.6,294.9 377.6,303.1 374.8,302.1" fill="#415a5e"/><polygon points="377.6,294.9 420.7,280.4 420.7,288.6 377.6,303.1" fill="#3d5659"/><polygon points="374.8,293.9 417.9,279.4 420.7,280.4 377.6,294.9" fill="#466064"/><polygon points="374.8,293.9 417.9,279.4 420.7,280.4 420.7,288.6 377.6,303.1 374.8,302.1" class="e"/>
<polygon points="583.0,165.5 609.4,174.5 609.4,179.2 583.0,170.2" fill="#415a5e"/><polygon points="609.4,174.5 614.2,172.8 614.2,177.5 609.4,179.2" fill="#3d5659"/><polygon points="583.0,165.5 587.8,163.8 614.2,172.8 609.4,174.5" fill="#466064"/><polygon points="583.0,165.5 587.8,163.8 614.2,172.8 614.2,177.5 609.4,179.2 583.0,170.2" class="e"/>
<polygon points="609.3,174.5 614.3,176.2 614.3,407.7 609.3,406.0" fill="#415a5e"/><polygon points="614.3,176.2 619.3,174.5 619.3,406.0 614.3,407.7" fill="#3d5659"/><polygon points="609.3,174.5 614.3,172.8 619.3,174.5 614.3,176.2" fill="#466064"/><polygon points="609.3,174.5 614.3,172.8 619.3,174.5 619.3,406.0 614.3,407.7 609.3,406.0" class="e"/>
<polygon points="566.3,378.9 571.1,380.5 571.1,387.1 566.3,385.5" fill="#415a5e"/><polygon points="571.1,380.5 614.2,366.0 614.2,372.6 571.1,387.1" fill="#3d5659"/><polygon points="566.3,378.9 609.4,364.4 614.2,366.0 571.1,380.5" fill="#466064"/><polygon points="566.3,378.9 609.4,364.4 614.2,366.0 614.2,372.6 571.1,387.1 566.3,385.5" class="e"/>
<polygon points="566.3,340.5 571.1,342.2 571.1,348.8 566.3,347.1" fill="#415a5e"/><polygon points="571.1,342.2 614.2,327.7 614.2,334.3 571.1,348.8" fill="#3d5659"/><polygon points="566.3,340.5 609.4,326.0 614.2,327.7 571.1,342.2" fill="#466064"/><polygon points="566.3,340.5 609.4,326.0 614.2,327.7 614.2,334.3 571.1,348.8 566.3,347.1" class="e"/>
<polygon points="566.3,302.2 571.1,303.8 571.1,310.4 566.3,308.8" fill="#415a5e"/><polygon points="571.1,303.8 614.2,289.3 614.2,295.9 571.1,310.4" fill="#3d5659"/><polygon points="566.3,302.2 609.4,287.7 614.2,289.3 571.1,303.8" fill="#466064"/><polygon points="566.3,302.2 609.4,287.7 614.2,289.3 614.2,295.9 571.1,310.4 566.3,308.8" class="e"/>
<polygon points="470.0,263.6 470.5,263.8 470.5,270.4 470.0,270.2" fill="#3f565a"/><polygon points="470.5,263.8 513.6,249.3 513.6,255.9 470.5,270.4" fill="#3c5356"/><polygon points="470.0,263.6 513.1,249.1 513.6,249.3 470.5,263.8" fill="#445c60"/><polygon points="470.0,263.6 513.1,249.1 513.6,249.3 513.6,255.9 470.5,270.4 470.0,270.2" class="e"/>
<polygon points="373.8,263.4 378.6,265.1 378.6,271.7 373.8,270.0" fill="#415a5e"/><polygon points="378.6,265.1 421.7,250.6 421.7,257.2 378.6,271.7" fill="#3d5659"/><polygon points="373.8,263.4 416.9,248.9 421.7,250.6 378.6,265.1" fill="#466064"/><polygon points="373.8,263.4 416.9,248.9 421.7,250.6 421.7,257.2 378.6,271.7 373.8,270.0" class="e"/>
<polygon points="566.3,263.8 571.1,265.5 571.1,272.1 566.3,270.4" fill="#415a5e"/><polygon points="571.1,265.5 614.2,251.0 614.2,257.6 571.1,272.1" fill="#3d5659"/><polygon points="566.3,263.8 609.4,249.3 614.2,251.0 571.1,265.5" fill="#466064"/><polygon points="566.3,263.8 609.4,249.3 614.2,251.0 614.2,257.6 571.1,272.1 566.3,270.4" class="e"/>
<polygon points="421.9,250.6 465.0,265.3 465.0,271.9 421.9,257.2" fill="#415a5e"/><polygon points="465.0,265.3 469.9,263.6 469.9,270.2 465.0,271.9" fill="#3d5659"/><polygon points="421.9,250.6 426.7,248.9 469.9,263.6 465.0,265.3" fill="#466064"/><polygon points="421.9,250.6 426.7,248.9 469.9,263.6 469.9,270.2 465.0,271.9 421.9,257.2" class="e"/>
<polygon points="518.1,250.8 561.3,265.5 561.3,272.1 518.1,257.4" fill="#415a5e"/><polygon points="561.3,265.5 566.1,263.8 566.1,270.4 561.3,272.1" fill="#3d5659"/><polygon points="518.1,250.8 523.0,249.1 566.1,263.8 561.3,265.5" fill="#466064"/><polygon points="518.1,250.8 523.0,249.1 566.1,263.8 566.1,270.4 561.3,272.1 518.1,257.4" class="e"/>
<polygon points="374.8,255.6 377.6,256.5 377.6,264.7 374.8,263.8" fill="#415a5e"/><polygon points="377.6,256.5 420.7,242.0 420.7,250.2 377.6,264.7" fill="#3d5659"/><polygon points="374.8,255.6 417.9,241.1 420.7,242.0 377.6,256.5" fill="#466064"/><polygon points="374.8,255.6 417.9,241.1 420.7,242.0 420.7,250.2 377.6,264.7 374.8,263.8" class="e"/>
<polygon points="470.0,225.3 470.5,225.5 470.5,232.1 470.0,231.9" fill="#3f565a"/><polygon points="470.5,225.5 513.6,210.9 513.6,217.5 470.5,232.1" fill="#3c5356"/><polygon points="470.0,225.3 513.1,210.8 513.6,210.9 470.5,225.5" fill="#445c60"/><polygon points="470.0,225.3 513.1,210.8 513.6,210.9 513.6,217.5 470.5,232.1 470.0,231.9" class="e"/>
<polygon points="373.8,225.1 378.6,226.7 378.6,233.3 373.8,231.7" fill="#415a5e"/><polygon points="378.6,226.7 421.7,212.2 421.7,218.8 378.6,233.3" fill="#3d5659"/><polygon points="373.8,225.1 416.9,210.6 421.7,212.2 378.6,226.7" fill="#466064"/><polygon points="373.8,225.1 416.9,210.6 421.7,212.2 421.7,218.8 378.6,233.3 373.8,231.7" class="e"/>
<polygon points="566.3,225.5 571.1,227.1 571.1,233.7 566.3,232.1" fill="#415a5e"/><polygon points="571.1,227.1 614.2,212.6 614.2,219.2 571.1,233.7" fill="#3d5659"/><polygon points="566.3,225.5 609.4,211.0 614.2,212.6 571.1,227.1" fill="#466064"/><polygon points="566.3,225.5 609.4,211.0 614.2,212.6 614.2,219.2 571.1,233.7 566.3,232.1" class="e"/>
<polygon points="421.9,212.2 465.0,226.9 465.0,233.5 421.9,218.8" fill="#415a5e"/><polygon points="465.0,226.9 469.9,225.3 469.9,231.9 465.0,233.5" fill="#3d5659"/><polygon points="421.9,212.2 426.7,210.6 469.9,225.3 465.0,226.9" fill="#466064"/><polygon points="421.9,212.2 426.7,210.6 469.9,225.3 469.9,231.9 465.0,233.5 421.9,218.8" class="e"/>
<polygon points="518.1,212.4 561.3,227.1 561.3,233.7 518.1,219.0" fill="#415a5e"/><polygon points="561.3,227.1 566.1,225.5 566.1,232.1 561.3,233.7" fill="#3d5659"/><polygon points="518.1,212.4 523.0,210.8 566.1,225.5 561.3,227.1" fill="#466064"/><polygon points="518.1,212.4 523.0,210.8 566.1,225.5 566.1,232.1 561.3,233.7 518.1,219.0" class="e"/>
<polygon points="374.8,217.2 377.6,218.2 377.6,226.4 374.8,225.4" fill="#415a5e"/><polygon points="377.6,218.2 420.7,203.7 420.7,211.9 377.6,226.4" fill="#3d5659"/><polygon points="374.8,217.2 417.9,202.7 420.7,203.7 377.6,218.2" fill="#466064"/><polygon points="374.8,217.2 417.9,202.7 420.7,203.7 420.7,211.9 377.6,226.4 374.8,225.4" class="e"/>
<polygon points="470.0,188.8 470.5,189.0 470.5,193.7 470.0,193.5" fill="#3f565a"/><polygon points="470.5,189.0 513.6,174.5 513.6,179.2 470.5,193.7" fill="#3c5356"/><polygon points="470.0,188.8 513.1,174.3 513.6,174.5 470.5,189.0" fill="#445c60"/><polygon points="470.0,188.8 513.1,174.3 513.6,174.5 513.6,179.2 470.5,193.7 470.0,193.5" class="e"/>
<polygon points="470.5,189.0 474.4,190.3 474.4,421.8 470.5,420.5" fill="#3f565a"/><polygon points="474.4,190.3 517.5,175.8 517.5,407.3 474.4,421.8" fill="#3c5356"/><polygon points="470.5,189.0 513.6,174.5 517.5,175.8 474.4,190.3" fill="#466064"/><polygon points="470.5,189.0 513.6,174.5 517.5,175.8 517.5,407.3 474.4,421.8 470.5,420.5" class="e"/>
<polygon points="474.4,380.2 474.9,380.3 474.9,386.9 474.4,386.8" fill="#3f565a"/><polygon points="474.9,380.3 518.0,365.8 518.0,372.4 474.9,386.9" fill="#3c5356"/><polygon points="474.4,380.2 517.5,365.6 518.0,365.8 474.9,380.3" fill="#445c60"/><polygon points="474.4,380.2 517.5,365.6 518.0,365.8 518.0,372.4 474.9,386.9 474.4,386.8" class="e"/>
<polygon points="474.4,341.8 474.9,342.0 474.9,348.6 474.4,348.4" fill="#3f565a"/><polygon points="474.9,342.0 518.0,327.5 518.0,334.1 474.9,348.6" fill="#3c5356"/><polygon points="474.4,341.8 517.5,327.3 518.0,327.5 474.9,342.0" fill="#445c60"/><polygon points="474.4,341.8 517.5,327.3 518.0,327.5 518.0,334.1 474.9,348.6 474.4,348.4" class="e"/>
<polygon points="474.4,303.5 474.9,303.6 474.9,310.2 474.4,310.1" fill="#3f565a"/><polygon points="474.9,303.6 518.0,289.1 518.0,295.7 474.9,310.2" fill="#3c5356"/><polygon points="474.4,303.5 517.5,288.9 518.0,289.1 474.9,303.6" fill="#445c60"/><polygon points="474.4,303.5 517.5,288.9 518.0,289.1 518.0,295.7 474.9,310.2 474.4,310.1" class="e"/>
<polygon points="474.4,265.1 474.9,265.3 474.9,271.9 474.4,271.7" fill="#3f565a"/><polygon points="474.9,265.3 518.0,250.8 518.0,257.4 474.9,271.9" fill="#3c5356"/><polygon points="474.4,265.1 517.5,250.6 518.0,250.8 474.9,265.3" fill="#445c60"/><polygon points="474.4,265.1 517.5,250.6 518.0,250.8 518.0,257.4 474.9,271.9 474.4,271.7" class="e"/>
<polygon points="474.4,226.8 474.9,226.9 474.9,233.5 474.4,233.4" fill="#3f565a"/><polygon points="474.9,226.9 518.0,212.4 518.0,219.0 474.9,233.5" fill="#3c5356"/><polygon points="474.4,226.8 517.5,212.2 518.0,212.4 474.9,226.9" fill="#445c60"/><polygon points="474.4,226.8 517.5,212.2 518.0,212.4 518.0,219.0 474.9,233.5 474.4,233.4" class="e"/>
<polygon points="373.8,188.6 378.6,190.3 378.6,195.0 373.8,193.3" fill="#415a5e"/><polygon points="378.6,190.3 421.7,175.8 421.7,180.5 378.6,195.0" fill="#3d5659"/><polygon points="373.8,188.6 416.9,174.1 421.7,175.8 378.6,190.3" fill="#466064"/><polygon points="373.8,188.6 416.9,174.1 421.7,175.8 421.7,180.5 378.6,195.0 373.8,193.3" class="e"/>
<polygon points="368.7,190.3 373.7,192.0 373.7,423.5 368.7,421.8" fill="#415a5e"/><polygon points="373.7,192.0 378.7,190.3 378.7,421.8 373.7,423.5" fill="#3d5659"/><polygon points="368.7,190.3 373.7,188.6 378.7,190.3 373.7,192.0" fill="#466064"/><polygon points="368.7,190.3 373.7,188.6 378.7,190.3 378.7,421.8 373.7,423.5 368.7,421.8" class="e"/>
<polygon points="373.8,381.8 401.0,391.1 401.0,397.7 373.8,388.4" fill="#415a5e"/><polygon points="401.0,391.1 405.8,389.5 405.8,396.1 401.0,397.7" fill="#3d5659"/><polygon points="373.8,381.8 378.6,380.2 405.8,389.5 401.0,391.1" fill="#466064"/><polygon points="373.8,381.8 378.6,380.2 405.8,389.5 405.8,396.1 401.0,397.7 373.8,388.4" class="e"/>
<polygon points="373.8,343.5 401.0,352.7 401.0,359.3 373.8,350.1" fill="#415a5e"/><polygon points="401.0,352.7 405.8,351.1 405.8,357.7 401.0,359.3" fill="#3d5659"/><polygon points="373.8,343.5 378.6,341.8 405.8,351.1 401.0,352.7" fill="#466064"/><polygon points="373.8,343.5 378.6,341.8 405.8,351.1 405.8,357.7 401.0,359.3 373.8,350.1" class="e"/>
<polygon points="373.8,305.1 401.0,314.4 401.0,321.0 373.8,311.7" fill="#415a5e"/><polygon points="401.0,314.4 405.8,312.8 405.8,319.4 401.0,321.0" fill="#3d5659"/><polygon points="373.8,305.1 378.6,303.5 405.8,312.8 401.0,314.4" fill="#466064"/><polygon points="373.8,305.1 378.6,303.5 405.8,312.8 405.8,319.4 401.0,321.0 373.8,311.7" class="e"/>
<polygon points="566.3,189.0 571.1,190.7 571.1,195.4 566.3,193.7" fill="#415a5e"/><polygon points="571.1,190.7 614.2,176.2 614.2,180.9 571.1,195.4" fill="#3d5659"/><polygon points="566.3,189.0 609.4,174.5 614.2,176.2 571.1,190.7" fill="#466064"/><polygon points="566.3,189.0 609.4,174.5 614.2,176.2 614.2,180.9 571.1,195.4 566.3,193.7" class="e"/>
<polygon points="421.9,175.8 465.0,190.5 465.0,195.2 421.9,180.5" fill="#415a5e"/><polygon points="465.0,190.5 469.9,188.8 469.9,193.5 465.0,195.2" fill="#3d5659"/><polygon points="421.9,175.8 426.7,174.1 469.9,188.8 465.0,190.5" fill="#466064"/><polygon points="421.9,175.8 426.7,174.1 469.9,188.8 469.9,193.5 465.0,195.2 421.9,180.5" class="e"/>
<polygon points="518.1,176.0 561.3,190.7 561.3,195.4 518.1,180.7" fill="#415a5e"/><polygon points="561.3,190.7 566.1,189.0 566.1,193.7 561.3,195.4" fill="#3d5659"/><polygon points="518.1,176.0 523.0,174.3 566.1,189.0 561.3,190.7" fill="#466064"/><polygon points="518.1,176.0 523.0,174.3 566.1,189.0 566.1,193.7 561.3,195.4 518.1,180.7" class="e"/>
<polygon points="561.2,190.7 566.2,192.4 566.2,423.9 561.2,422.2" fill="#415a5e"/><polygon points="566.2,192.4 571.2,190.7 571.2,422.2 566.2,423.9" fill="#3d5659"/><polygon points="561.2,190.7 566.2,189.0 571.2,190.7 566.2,192.4" fill="#466064"/><polygon points="561.2,190.7 566.2,189.0 571.2,190.7 571.2,422.2 566.2,423.9 561.2,422.2" class="e"/>
<polygon points="518.2,395.1 523.0,396.7 523.0,403.3 518.2,401.7" fill="#415a5e"/><polygon points="523.0,396.7 566.1,382.2 566.1,388.8 523.0,403.3" fill="#3d5659"/><polygon points="518.2,395.1 561.3,380.6 566.1,382.2 523.0,396.7" fill="#466064"/><polygon points="518.2,395.1 561.3,380.6 566.1,382.2 566.1,388.8 523.0,403.3 518.2,401.7" class="e"/>
<polygon points="518.2,356.7 523.0,358.4 523.0,365.0 518.2,363.3" fill="#415a5e"/><polygon points="523.0,358.4 566.1,343.9 566.1,350.5 523.0,365.0" fill="#3d5659"/><polygon points="518.2,356.7 561.3,342.2 566.1,343.9 523.0,358.4" fill="#466064"/><polygon points="518.2,356.7 561.3,342.2 566.1,343.9 566.1,350.5 523.0,365.0 518.2,363.3" class="e"/>
<polygon points="474.4,190.3 474.9,190.5 474.9,195.2 474.4,195.0" fill="#3f565a"/><polygon points="474.9,190.5 518.0,176.0 518.0,180.7 474.9,195.2" fill="#3c5356"/><polygon points="474.4,190.3 517.5,175.8 518.0,176.0 474.9,190.5" fill="#445c60"/><polygon points="474.4,190.3 517.5,175.8 518.0,176.0 518.0,180.7 474.9,195.2 474.4,195.0" class="e"/>
<polygon points="464.9,190.5 470.0,192.2 470.0,423.7 464.9,422.0" fill="#415a5e"/><polygon points="470.0,192.2 475.0,190.5 475.0,422.0 470.0,423.7" fill="#3d5659"/><polygon points="464.9,190.5 469.9,188.8 475.0,190.5 470.0,192.2" fill="#466064"/><polygon points="464.9,190.5 469.9,188.8 475.0,190.5 475.0,422.0 470.0,423.7 464.9,422.0" class="e"/>
<polygon points="421.9,394.9 426.8,396.5 426.8,403.1 421.9,401.5" fill="#415a5e"/><polygon points="426.8,396.5 469.9,382.0 469.9,388.6 426.8,403.1" fill="#3d5659"/><polygon points="421.9,394.9 465.0,380.4 469.9,382.0 426.8,396.5" fill="#466064"/><polygon points="421.9,394.9 465.0,380.4 469.9,382.0 469.9,388.6 426.8,403.1 421.9,401.5" class="e"/>
<polygon points="470.0,382.0 513.2,396.7 513.2,403.3 470.0,388.6" fill="#415a5e"/><polygon points="513.2,396.7 518.0,395.1 518.0,401.7 513.2,403.3" fill="#3d5659"/><polygon points="470.0,382.0 474.9,380.4 518.0,395.1 513.2,396.7" fill="#466064"/><polygon points="470.0,382.0 474.9,380.4 518.0,395.1 518.0,401.7 513.2,403.3 470.0,388.6" class="e"/>
<polygon points="405.3,389.6 423.8,395.9 423.8,402.5 405.3,396.2" fill="#3f565a"/><polygon points="423.8,395.9 424.3,395.7 424.3,402.3 423.8,402.5" fill="#3c5356"/><polygon points="405.3,389.6 405.8,389.5 424.3,395.7 423.8,395.9" fill="#445c60"/><polygon points="405.3,389.6 405.8,389.5 424.3,395.7 424.3,402.3 423.8,402.5 405.3,396.2" class="e"/>
<polygon points="421.9,356.5 426.8,358.2 426.8,364.8 421.9,363.1" fill="#415a5e"/><polygon points="426.8,358.2 469.9,343.7 469.9,350.3 426.8,364.8" fill="#3d5659"/><polygon points="421.9,356.5 465.0,342.0 469.9,343.7 426.8,358.2" fill="#466064"/><polygon points="421.9,356.5 465.0,342.0 469.9,343.7 469.9,350.3 426.8,364.8 421.9,363.1" class="e"/>
<polygon points="470.0,343.7 513.2,358.4 513.2,365.0 470.0,350.3" fill="#415a5e"/><polygon points="513.2,358.4 518.0,356.7 518.0,363.3 513.2,365.0" fill="#3d5659"/><polygon points="470.0,343.7 474.9,342.0 518.0,356.7 513.2,358.4" fill="#466064"/><polygon points="470.0,343.7 474.9,342.0 518.0,356.7 518.0,363.3 513.2,365.0 470.0,350.3" class="e"/>
<polygon points="405.3,351.3 423.8,357.6 423.8,364.2 405.3,357.9" fill="#3f565a"/><polygon points="423.8,357.6 424.3,357.4 424.3,364.0 423.8,364.2" fill="#3c5356"/><polygon points="405.3,351.3 405.8,351.1 424.3,357.4 423.8,357.6" fill="#445c60"/><polygon points="405.3,351.3 405.8,351.1 424.3,357.4 424.3,364.0 423.8,364.2 405.3,357.9" class="e"/>
<polygon points="421.9,318.2 426.8,319.8 426.8,326.4 421.9,324.8" fill="#415a5e"/><polygon points="426.8,319.8 469.9,305.3 469.9,311.9 426.8,326.4" fill="#3d5659"/><polygon points="421.9,318.2 465.0,303.7 469.9,305.3 426.8,319.8" fill="#466064"/><polygon points="421.9,318.2 465.0,303.7 469.9,305.3 469.9,311.9 426.8,326.4 421.9,324.8" class="e"/>
<polygon points="518.2,318.4 523.0,320.0 523.0,326.6 518.2,325.0" fill="#415a5e"/><polygon points="523.0,320.0 566.1,305.5 566.1,312.1 523.0,326.6" fill="#3d5659"/><polygon points="518.2,318.4 561.3,303.9 566.1,305.5 523.0,320.0" fill="#466064"/><polygon points="518.2,318.4 561.3,303.9 566.1,305.5 566.1,312.1 523.0,326.6 518.2,325.0" class="e"/>
<polygon points="470.0,305.3 513.2,320.0 513.2,326.6 470.0,311.9" fill="#415a5e"/><polygon points="513.2,320.0 518.0,318.4 518.0,325.0 513.2,326.6" fill="#3d5659"/><polygon points="470.0,305.3 474.9,303.7 518.0,318.4 513.2,320.0" fill="#466064"/><polygon points="470.0,305.3 474.9,303.7 518.0,318.4 518.0,325.0 513.2,326.6 470.0,311.9" class="e"/>
<polygon points="423.8,395.9 443.0,402.5 443.0,409.1 423.8,402.5" fill="#3f565a"/><polygon points="443.0,402.5 443.5,402.3 443.5,408.9 443.0,409.1" fill="#3c5356"/><polygon points="423.8,395.9 424.3,395.7 443.5,402.3 443.0,402.5" fill="#445c60"/><polygon points="423.8,395.9 424.3,395.7 443.5,402.3 443.5,408.9 443.0,409.1 423.8,402.5" class="e"/>
<polygon points="373.8,266.8 401.0,276.0 401.0,282.6 373.8,273.4" fill="#415a5e"/><polygon points="401.0,276.0 405.8,274.4 405.8,281.0 401.0,282.6" fill="#3d5659"/><polygon points="373.8,266.8 378.6,265.1 405.8,274.4 401.0,276.0" fill="#466064"/><polygon points="373.8,266.8 378.6,265.1 405.8,274.4 405.8,281.0 401.0,282.6 373.8,273.4" class="e"/>
<polygon points="405.3,312.9 423.8,319.2 423.8,325.8 405.3,319.5" fill="#3f565a"/><polygon points="423.8,319.2 424.3,319.0 424.3,325.6 423.8,325.8" fill="#3c5356"/><polygon points="405.3,312.9 405.8,312.8 424.3,319.0 423.8,319.2" fill="#445c60"/><polygon points="405.3,312.9 405.8,312.8 424.3,319.0 424.3,325.6 423.8,325.8 405.3,319.5" class="e"/>
<polygon points="421.9,279.8 426.8,281.5 426.8,288.1 421.9,286.4" fill="#415a5e"/><polygon points="426.8,281.5 469.9,267.0 469.9,273.6 426.8,288.1" fill="#3d5659"/><polygon points="421.9,279.8 465.0,265.3 469.9,267.0 426.8,281.5" fill="#466064"/><polygon points="421.9,279.8 465.0,265.3 469.9,267.0 469.9,273.6 426.8,288.1 421.9,286.4" class="e"/>
<polygon points="518.2,280.0 523.0,281.7 523.0,288.3 518.2,286.6" fill="#415a5e"/><polygon points="523.0,281.7 566.1,267.2 566.1,273.8 523.0,288.3" fill="#3d5659"/><polygon points="518.2,280.0 561.3,265.5 566.1,267.2 523.0,281.7" fill="#466064"/><polygon points="518.2,280.0 561.3,265.5 566.1,267.2 566.1,273.8 523.0,288.3 518.2,286.6" class="e"/>
<polygon points="470.0,267.0 513.2,281.7 513.2,288.3 470.0,273.6" fill="#415a5e"/><polygon points="513.2,281.7 518.0,280.0 518.0,286.6 513.2,288.3" fill="#3d5659"/><polygon points="470.0,267.0 474.9,265.3 518.0,280.0 513.2,281.7" fill="#466064"/><polygon points="470.0,267.0 474.9,265.3 518.0,280.0 518.0,286.6 513.2,288.3 470.0,273.6" class="e"/>
<polygon points="423.8,357.6 443.0,364.1 443.0,370.7 423.8,364.2" fill="#3f565a"/><polygon points="443.0,364.1 443.5,363.9 443.5,370.5 443.0,370.7" fill="#3c5356"/><polygon points="423.8,357.6 424.3,357.4 443.5,363.9 443.0,364.1" fill="#445c60"/><polygon points="423.8,357.6 424.3,357.4 443.5,363.9 443.5,370.5 443.0,370.7 423.8,364.2" class="e"/>
<polygon points="373.8,228.4 401.0,237.7 401.0,244.3 373.8,235.0" fill="#415a5e"/><polygon points="401.0,237.7 405.8,236.1 405.8,242.7 401.0,244.3" fill="#3d5659"/><polygon points="373.8,228.4 378.6,226.8 405.8,236.1 401.0,237.7" fill="#466064"/><polygon points="373.8,228.4 378.6,226.8 405.8,236.1 405.8,242.7 401.0,244.3 373.8,235.0" class="e"/>
<polygon points="405.3,274.6 423.8,280.9 423.8,287.5 405.3,281.2" fill="#3f565a"/><polygon points="423.8,280.9 424.3,280.7 424.3,287.3 423.8,287.5" fill="#3c5356"/><polygon points="405.3,274.6 405.8,274.4 424.3,280.7 423.8,280.9" fill="#445c60"/><polygon points="405.3,274.6 405.8,274.4 424.3,280.7 424.3,287.3 423.8,287.5 405.3,281.2" class="e"/>
<polygon points="421.9,241.5 426.8,243.1 426.8,249.7 421.9,248.1" fill="#415a5e"/><polygon points="426.8,243.1 469.9,228.6 469.9,235.2 426.8,249.7" fill="#3d5659"/><polygon points="421.9,241.5 465.0,227.0 469.9,228.6 426.8,243.1" fill="#466064"/><polygon points="421.9,241.5 465.0,227.0 469.9,228.6 469.9,235.2 426.8,249.7 421.9,248.1" class="e"/>
<polygon points="518.2,241.7 523.0,243.3 523.0,249.9 518.2,248.3" fill="#415a5e"/><polygon points="523.0,243.3 566.1,228.8 566.1,235.4 523.0,249.9" fill="#3d5659"/><polygon points="518.2,241.7 561.3,227.2 566.1,228.8 523.0,243.3" fill="#466064"/><polygon points="518.2,241.7 561.3,227.2 566.1,228.8 566.1,235.4 523.0,249.9 518.2,248.3" class="e"/>
<polygon points="470.0,228.6 513.2,243.3 513.2,249.9 470.0,235.2" fill="#415a5e"/><polygon points="513.2,243.3 518.0,241.7 518.0,248.3 513.2,249.9" fill="#3d5659"/><polygon points="470.0,228.6 474.9,227.0 518.0,241.7 513.2,243.3" fill="#466064"/><polygon points="470.0,228.6 474.9,227.0 518.0,241.7 518.0,248.3 513.2,249.9 470.0,235.2" class="e"/>
<polygon points="423.8,319.2 443.0,325.8 443.0,332.4 423.8,325.8" fill="#3f565a"/><polygon points="443.0,325.8 443.5,325.6 443.5,332.2 443.0,332.4" fill="#3c5356"/><polygon points="423.8,319.2 424.3,319.0 443.5,325.6 443.0,325.8" fill="#445c60"/><polygon points="423.8,319.2 424.3,319.0 443.5,325.6 443.5,332.2 443.0,332.4 423.8,325.8" class="e"/>
<polygon points="373.8,192.0 401.0,201.2 401.0,205.9 373.8,196.7" fill="#415a5e"/><polygon points="401.0,201.2 405.8,199.6 405.8,204.3 401.0,205.9" fill="#3d5659"/><polygon points="373.8,192.0 378.6,190.3 405.8,199.6 401.0,201.2" fill="#466064"/><polygon points="373.8,192.0 378.6,190.3 405.8,199.6 405.8,204.3 401.0,205.9 373.8,196.7" class="e"/>
<polygon points="405.3,236.2 423.8,242.5 423.8,249.1 405.3,242.8" fill="#3f565a"/><polygon points="423.8,242.5 424.3,242.3 424.3,248.9 423.8,249.1" fill="#3c5356"/><polygon points="405.3,236.2 405.8,236.1 424.3,242.3 423.8,242.5" fill="#445c60"/><polygon points="405.3,236.2 405.8,236.1 424.3,242.3 424.3,248.9 423.8,249.1 405.3,242.8" class="e"/>
<polygon points="421.9,205.0 426.8,206.7 426.8,211.4 421.9,209.7" fill="#415a5e"/><polygon points="426.8,206.7 469.9,192.2 469.9,196.9 426.8,211.4" fill="#3d5659"/><polygon points="421.9,205.0 465.0,190.5 469.9,192.2 426.8,206.7" fill="#466064"/><polygon points="421.9,205.0 465.0,190.5 469.9,192.2 469.9,196.9 426.8,211.4 421.9,209.7" class="e"/>
<polygon points="518.2,205.2 523.0,206.9 523.0,211.6 518.2,209.9" fill="#415a5e"/><polygon points="523.0,206.9 566.1,192.4 566.1,197.1 523.0,211.6" fill="#3d5659"/><polygon points="518.2,205.2 561.3,190.7 566.1,192.4 523.0,206.9" fill="#466064"/><polygon points="518.2,205.2 561.3,190.7 566.1,192.4 566.1,197.1 523.0,211.6 518.2,209.9" class="e"/>
<polygon points="470.0,192.2 513.2,206.9 513.2,211.6 470.0,196.9" fill="#415a5e"/><polygon points="513.2,206.9 518.0,205.2 518.0,209.9 513.2,211.6" fill="#3d5659"/><polygon points="470.0,192.2 474.9,190.5 518.0,205.2 513.2,206.9" fill="#466064"/><polygon points="470.0,192.2 474.9,190.5 518.0,205.2 518.0,209.9 513.2,211.6 470.0,196.9" class="e"/>
<polygon points="513.1,206.9 518.1,208.6 518.1,440.1 513.1,438.4" fill="#415a5e"/><polygon points="518.1,208.6 523.1,206.9 523.1,438.4 518.1,440.1" fill="#3d5659"/><polygon points="513.1,206.9 518.1,205.2 523.1,206.9 518.1,208.6" fill="#466064"/><polygon points="513.1,206.9 518.1,205.2 523.1,206.9 523.1,438.4 518.1,440.1 513.1,438.4" class="e"/>
<polygon points="470.1,411.3 474.9,412.9 474.9,419.5 470.1,417.9" fill="#415a5e"/><polygon points="474.9,412.9 518.0,398.4 518.0,405.0 474.9,419.5" fill="#3d5659"/><polygon points="470.1,411.3 513.2,396.8 518.0,398.4 474.9,412.9" fill="#466064"/><polygon points="470.1,411.3 513.2,396.8 518.0,398.4 518.0,405.0 474.9,419.5 470.1,417.9" class="e"/>
<polygon points="470.1,372.9 474.9,374.6 474.9,381.2 470.1,379.5" fill="#415a5e"/><polygon points="474.9,374.6 518.0,360.1 518.0,366.7 474.9,381.2" fill="#3d5659"/><polygon points="470.1,372.9 513.2,358.4 518.0,360.1 474.9,374.6" fill="#466064"/><polygon points="470.1,372.9 513.2,358.4 518.0,360.1 518.0,366.7 474.9,381.2 470.1,379.5" class="e"/>
<polygon points="423.8,280.9 443.0,287.4 443.0,294.0 423.8,287.5" fill="#3f565a"/><polygon points="443.0,287.4 443.5,287.2 443.5,293.9 443.0,294.0" fill="#3c5356"/><polygon points="423.8,280.9 424.3,280.7 443.5,287.2 443.0,287.4" fill="#445c60"/><polygon points="423.8,280.9 424.3,280.7 443.5,287.2 443.5,293.9 443.0,294.0 423.8,287.5" class="e"/>
<polygon points="470.1,334.6 474.9,336.2 474.9,342.8 470.1,341.2" fill="#415a5e"/><polygon points="474.9,336.2 518.0,321.7 518.0,328.3 474.9,342.8" fill="#3d5659"/><polygon points="470.1,334.6 513.2,320.1 518.0,321.7 474.9,336.2" fill="#466064"/><polygon points="470.1,334.6 513.2,320.1 518.0,321.7 518.0,328.3 474.9,342.8 470.1,341.2" class="e"/>
<polygon points="405.3,199.8 423.8,206.1 423.8,210.8 405.3,204.5" fill="#3f565a"/><polygon points="423.8,206.1 424.3,205.9 424.3,210.6 423.8,210.8" fill="#3c5356"/><polygon points="405.3,199.8 405.8,199.6 424.3,205.9 423.8,206.1" fill="#445c60"/><polygon points="405.3,199.8 405.8,199.6 424.3,205.9 424.3,210.6 423.8,210.8 405.3,204.5" class="e"/>
<polygon points="423.8,242.5 443.0,249.1 443.0,255.7 423.8,249.1" fill="#3f565a"/><polygon points="443.0,249.1 443.5,248.9 443.5,255.5 443.0,255.7" fill="#3c5356"/><polygon points="423.8,242.5 424.3,242.3 443.5,248.9 443.0,249.1" fill="#445c60"/><polygon points="423.8,242.5 424.3,242.3 443.5,248.9 443.5,255.5 443.0,255.7 423.8,249.1" class="e"/>
<polygon points="470.1,296.2 474.9,297.9 474.9,304.5 470.1,302.8" fill="#415a5e"/><polygon points="474.9,297.9 518.0,283.4 518.0,290.0 474.9,304.5" fill="#3d5659"/><polygon points="470.1,296.2 513.2,281.7 518.0,283.4 474.9,297.9" fill="#466064"/><polygon points="470.1,296.2 513.2,281.7 518.0,283.4 518.0,290.0 474.9,304.5 470.1,302.8" class="e"/>
<polygon points="423.8,206.1 443.0,212.6 443.0,217.3 423.8,210.8" fill="#3f565a"/><polygon points="443.0,212.6 443.5,212.4 443.5,217.1 443.0,217.3" fill="#3c5356"/><polygon points="423.8,206.1 424.3,205.9 443.5,212.4 443.0,212.6" fill="#445c60"/><polygon points="423.8,206.1 424.3,205.9 443.5,212.4 443.5,217.1 443.0,217.3 423.8,210.8" class="e"/>
<polygon points="401.5,201.1 439.2,213.9 439.2,445.4 401.5,432.6" fill="#3f565a"/><polygon points="439.2,213.9 443.0,212.6 443.0,444.1 439.2,445.4" fill="#3c5356"/><polygon points="401.5,201.1 405.3,199.8 443.0,212.6 439.2,213.9" fill="#466064"/><polygon points="401.5,201.1 405.3,199.8 443.0,212.6 443.0,444.1 439.2,445.4 401.5,432.6" class="e"/>
<polygon points="401.0,391.1 419.4,397.4 419.4,404.0 401.0,397.7" fill="#3f565a"/><polygon points="419.4,397.4 419.9,397.2 419.9,403.8 419.4,404.0" fill="#3c5356"/><polygon points="401.0,391.1 401.5,390.9 419.9,397.2 419.4,397.4" fill="#445c60"/><polygon points="401.0,391.1 401.5,390.9 419.9,397.2 419.9,403.8 419.4,404.0 401.0,397.7" class="e"/>
<polygon points="401.0,352.7 419.4,359.0 419.4,365.6 401.0,359.3" fill="#3f565a"/><polygon points="419.4,359.0 419.9,358.8 419.9,365.4 419.4,365.6" fill="#3c5356"/><polygon points="401.0,352.7 401.5,352.6 419.9,358.8 419.4,359.0" fill="#445c60"/><polygon points="401.0,352.7 401.5,352.6 419.9,358.8 419.9,365.4 419.4,365.6 401.0,359.3" class="e"/>
<polygon points="419.4,397.4 438.7,403.9 438.7,410.5 419.4,404.0" fill="#3f565a"/><polygon points="438.7,403.9 439.2,403.8 439.2,410.4 438.7,410.5" fill="#3c5356"/><polygon points="419.4,397.4 419.9,397.2 439.2,403.8 438.7,403.9" fill="#445c60"/><polygon points="419.4,397.4 419.9,397.2 439.2,403.8 439.2,410.4 438.7,410.5 419.4,404.0" class="e"/>
<polygon points="401.0,314.4 419.4,320.7 419.4,327.3 401.0,321.0" fill="#3f565a"/><polygon points="419.4,320.7 419.9,320.5 419.9,327.1 419.4,327.3" fill="#3c5356"/><polygon points="401.0,314.4 401.5,314.2 419.9,320.5 419.4,320.7" fill="#445c60"/><polygon points="401.0,314.4 401.5,314.2 419.9,320.5 419.9,327.1 419.4,327.3 401.0,321.0" class="e"/>
<polygon points="419.4,359.0 438.7,365.6 438.7,372.2 419.4,365.6" fill="#3f565a"/><polygon points="438.7,365.6 439.2,365.4 439.2,372.0 438.7,372.2" fill="#3c5356"/><polygon points="419.4,359.0 419.9,358.8 439.2,365.4 438.7,365.6" fill="#445c60"/><polygon points="419.4,359.0 419.9,358.8 439.2,365.4 439.2,372.0 438.7,372.2 419.4,365.6" class="e"/>
<polygon points="438.7,403.9 465.1,412.9 465.1,419.5 438.7,410.5" fill="#415a5e"/><polygon points="465.1,412.9 469.9,411.3 469.9,417.9 465.1,419.5" fill="#3d5659"/><polygon points="438.7,403.9 443.5,402.3 469.9,411.3 465.1,412.9" fill="#466064"/><polygon points="438.7,403.9 443.5,402.3 469.9,411.3 469.9,417.9 465.1,419.5 438.7,410.5" class="e"/>
<polygon points="401.0,276.0 419.4,282.3 419.4,288.9 401.0,282.6" fill="#3f565a"/><polygon points="419.4,282.3 419.9,282.1 419.9,288.7 419.4,288.9" fill="#3c5356"/><polygon points="401.0,276.0 401.5,275.9 419.9,282.1 419.4,282.3" fill="#445c60"/><polygon points="401.0,276.0 401.5,275.9 419.9,282.1 419.9,288.7 419.4,288.9 401.0,282.6" class="e"/>
<polygon points="419.4,320.7 438.7,327.2 438.7,333.8 419.4,327.3" fill="#3f565a"/><polygon points="438.7,327.2 439.2,327.1 439.2,333.7 438.7,333.8" fill="#3c5356"/><polygon points="419.4,320.7 419.9,320.5 439.2,327.1 438.7,327.2" fill="#445c60"/><polygon points="419.4,320.7 419.9,320.5 439.2,327.1 439.2,333.7 438.7,333.8 419.4,327.3" class="e"/>
<polygon points="438.7,365.6 465.1,374.6 465.1,381.2 438.7,372.2" fill="#415a5e"/><polygon points="465.1,374.6 469.9,372.9 469.9,379.5 465.1,381.2" fill="#3d5659"/><polygon points="438.7,365.6 443.5,363.9 469.9,372.9 465.1,374.6" fill="#466064"/><polygon points="438.7,365.6 443.5,363.9 469.9,372.9 469.9,379.5 465.1,381.2 438.7,372.2" class="e"/>
<polygon points="401.0,237.7 419.4,244.0 419.4,250.6 401.0,244.3" fill="#3f565a"/><polygon points="419.4,244.0 419.9,243.8 419.9,250.4 419.4,250.6" fill="#3c5356"/><polygon points="401.0,237.7 401.5,237.5 419.9,243.8 419.4,244.0" fill="#445c60"/><polygon points="401.0,237.7 401.5,237.5 419.9,243.8 419.9,250.4 419.4,250.6 401.0,244.3" class="e"/>
<polygon points="419.4,282.3 438.7,288.9 438.7,295.5 419.4,288.9" fill="#3f565a"/><polygon points="438.7,288.9 439.2,288.7 439.2,295.3 438.7,295.5" fill="#3c5356"/><polygon points="419.4,282.3 419.9,282.1 439.2,288.7 438.7,288.9" fill="#445c60"/><polygon points="419.4,282.3 419.9,282.1 439.2,288.7 439.2,295.3 438.7,295.5 419.4,288.9" class="e"/>
<polygon points="438.7,327.2 465.1,336.2 465.1,342.8 438.7,333.8" fill="#415a5e"/><polygon points="465.1,336.2 469.9,334.6 469.9,341.2 465.1,342.8" fill="#3d5659"/><polygon points="438.7,327.2 443.5,325.6 469.9,334.6 465.1,336.2" fill="#466064"/><polygon points="438.7,327.2 443.5,325.6 469.9,334.6 469.9,341.2 465.1,342.8 438.7,333.8" class="e"/>
<polygon points="401.0,201.2 419.4,207.5 419.4,212.2 401.0,205.9" fill="#3f565a"/><polygon points="419.4,207.5 419.9,207.3 419.9,212.0 419.4,212.2" fill="#3c5356"/><polygon points="401.0,201.2 401.5,201.1 419.9,207.3 419.4,207.5" fill="#445c60"/><polygon points="401.0,201.2 401.5,201.1 419.9,207.3 419.9,212.0 419.4,212.2 401.0,205.9" class="e"/>
<polygon points="419.4,244.0 438.7,250.5 438.7,257.1 419.4,250.6" fill="#3f565a"/><polygon points="438.7,250.5 439.2,250.4 439.2,257.0 438.7,257.1" fill="#3c5356"/><polygon points="419.4,244.0 419.9,243.8 439.2,250.4 438.7,250.5" fill="#445c60"/><polygon points="419.4,244.0 419.9,243.8 439.2,250.4 439.2,257.0 438.7,257.1 419.4,250.6" class="e"/>
<polygon points="438.7,288.9 465.1,297.9 465.1,304.5 438.7,295.5" fill="#415a5e"/><polygon points="465.1,297.9 469.9,296.2 469.9,302.8 465.1,304.5" fill="#3d5659"/><polygon points="438.7,288.9 443.5,287.2 469.9,296.2 465.1,297.9" fill="#466064"/><polygon points="438.7,288.9 443.5,287.2 469.9,296.2 469.9,302.8 465.1,304.5 438.7,295.5" class="e"/>
<polygon points="470.1,257.9 474.9,259.5 474.9,266.1 470.1,264.5" fill="#415a5e"/><polygon points="474.9,259.5 518.0,245.0 518.0,251.6 474.9,266.1" fill="#3d5659"/><polygon points="470.1,257.9 513.2,243.4 518.0,245.0 474.9,259.5" fill="#466064"/><polygon points="470.1,257.9 513.2,243.4 518.0,245.0 518.0,251.6 474.9,266.1 470.1,264.5" class="e"/>
<polygon points="419.4,207.5 438.7,214.1 438.7,218.8 419.4,212.2" fill="#3f565a"/><polygon points="438.7,214.1 439.2,213.9 439.2,218.6 438.7,218.8" fill="#3c5356"/><polygon points="419.4,207.5 419.9,207.3 439.2,213.9 438.7,214.1" fill="#445c60"/><polygon points="419.4,207.5 419.9,207.3 439.2,213.9 439.2,218.6 438.7,218.8 419.4,212.2" class="e"/>
<polygon points="438.7,250.5 465.1,259.5 465.1,266.1 438.7,257.1" fill="#415a5e"/><polygon points="465.1,259.5 469.9,257.9 469.9,264.5 465.1,266.1" fill="#3d5659"/><polygon points="438.7,250.5 443.5,248.9 469.9,257.9 465.1,259.5" fill="#466064"/><polygon points="438.7,250.5 443.5,248.9 469.9,257.9 469.9,264.5 465.1,266.1 438.7,257.1" class="e"/>
<polygon points="470.1,221.4 474.9,223.1 474.9,227.8 470.1,226.1" fill="#415a5e"/><polygon points="474.9,223.1 518.0,208.6 518.0,213.3 474.9,227.8" fill="#3d5659"/><polygon points="470.1,221.4 513.2,206.9 518.0,208.6 474.9,223.1" fill="#466064"/><polygon points="470.1,221.4 513.2,206.9 518.0,208.6 518.0,213.3 474.9,227.8 470.1,226.1" class="e"/>
<polygon points="438.7,214.1 465.1,223.1 465.1,227.8 438.7,218.8" fill="#415a5e"/><polygon points="465.1,223.1 469.9,221.4 469.9,226.1 465.1,227.8" fill="#3d5659"/><polygon points="438.7,214.1 443.5,212.4 469.9,221.4 465.1,223.1" fill="#466064"/><polygon points="438.7,214.1 443.5,212.4 469.9,221.4 469.9,226.1 465.1,227.8 438.7,218.8" class="e"/>
<polygon points="465.0,223.1 470.0,224.8 470.0,456.3 465.0,454.6" fill="#415a5e"/><polygon points="470.0,224.8 475.0,223.1 475.0,454.6 470.0,456.3" fill="#3d5659"/><polygon points="465.0,223.1 470.0,221.4 475.0,223.1 470.0,224.8" fill="#466064"/><polygon points="465.0,223.1 470.0,221.4 475.0,223.1 475.0,454.6 470.0,456.3 465.0,454.6" class="e"/>
<polygon points="409.8,203.9 421.4,207.8 421.4,439.3 409.8,435.4" fill="#243438" fill-opacity=".16"/>
<path d="M404.6 433.6L404.6 202.1M407.8 434.7L407.8 203.2M410.9 435.8L410.9 204.3M414.1 436.8L414.1 205.3M417.2 437.9L417.2 206.4M420.3 439.0L420.3 207.5M423.5 440.1L423.5 208.6M426.6 441.1L426.6 209.6M429.8 442.2L429.8 210.7M432.9 443.3L432.9 211.8M436.0 444.3L436.0 212.8" stroke="#5a797e" stroke-width="0.6" stroke-opacity="0.38" fill="none"/>
<path d="M401.5 426.2L439.2 439.0M401.5 419.8L439.2 432.6M401.5 413.4L439.2 426.2M401.5 407.0L439.2 419.8M401.5 400.6L439.2 413.4M401.5 394.2L439.2 407.1M401.5 387.8L439.2 400.7M401.5 381.4L439.2 394.3M401.5 375.0L439.2 387.9M401.5 368.7L439.2 381.5M401.5 362.3L439.2 375.1M401.5 355.9L439.2 368.7M401.5 349.5L439.2 362.3M401.5 343.1L439.2 355.9M401.5 336.7L439.2 349.5M401.5 330.3L439.2 343.1M401.5 323.9L439.2 336.7M401.5 317.5L439.2 330.4M401.5 311.1L439.2 324.0M401.5 304.7L439.2 317.6M401.5 298.3L439.2 311.2M401.5 292.0L439.2 304.8M401.5 285.6L439.2 298.4M401.5 279.2L439.2 292.0M401.5 272.8L439.2 285.6M401.5 266.4L439.2 279.2M401.5 260.0L439.2 272.8M401.5 253.6L439.2 266.4M401.5 247.2L439.2 260.0M401.5 240.8L439.2 253.7M401.5 234.4L439.2 247.3M401.5 228.0L439.2 240.9M401.5 221.6L439.2 234.5M401.5 215.3L439.2 228.1M401.5 208.9L439.2 221.7" stroke="#5a797e" stroke-width="0.5" stroke-opacity="0.2" fill="none"/>
</svg>
<div style="left:781.500px;top:128.500px;width:11.500px;height:342px;background:#eff0f2;border-left:1px solid #e1e3e6"></div>
<div style="left:782.500px;top:139px;width:10px;height:320px;background:linear-gradient(90deg,#f6f6f7,#e4e5e8 55%,#d9dade);border:1px solid #a9adb5;border-radius:2px"></div>
<i style="left:784.500px;top:132px;width:6px;height:3.500px;background:#4a525e;clip-path:polygon(50% 0,100% 100%,0 100%)"></i>
<i style="left:784.500px;top:463.500px;width:6px;height:3.500px;background:#4a525e;clip-path:polygon(0 0,100% 0,50% 100%)"></i>
<div style="left:205px;top:470.500px;width:576.500px;height:11.500px;background:#eff0f2;border-top:1px solid #e1e3e6"></div>
<div style="left:314px;top:471px;width:358px;height:10.500px;background:linear-gradient(180deg,#f6f6f7,#e4e5e8 55%,#d9dade);border:1px solid #a9adb5;border-radius:2px"></div>
<i style="left:490px;top:473.500px;width:1px;height:5px;background:#7d838d;box-shadow:2px 0 0 #7d838d,4px 0 0 #7d838d"></i>
<i style="left:209px;top:473px;width:3.500px;height:6px;background:#4a525e;clip-path:polygon(100% 0,100% 100%,0 50%)"></i>
<i style="left:774px;top:473px;width:3.500px;height:6px;background:#4a525e;clip-path:polygon(0 0,100% 50%,0 100%)"></i>
<div style="left:781.500px;top:470.500px;width:11.500px;height:11.500px;background:#eef0f3"></div>
<div id="status"></div>
<span class="t" style="letter-spacing:-0.13px;left:8.500px;top:485.500px;font-size:8.800px">モード ： FEM結果</span>
<span class="t" style="letter-spacing:0.59px;left:199.500px;top:485.500px;font-size:8.800px">x=-25.000m, y=0.000m, z=-52.000m</span>
<i style="left:384px;top:484px;width:1px;height:12px;background:#d9dce1"></i>
<i style="left:668px;top:484px;width:1px;height:12px;background:#d9dce1"></i>
</body></html>
